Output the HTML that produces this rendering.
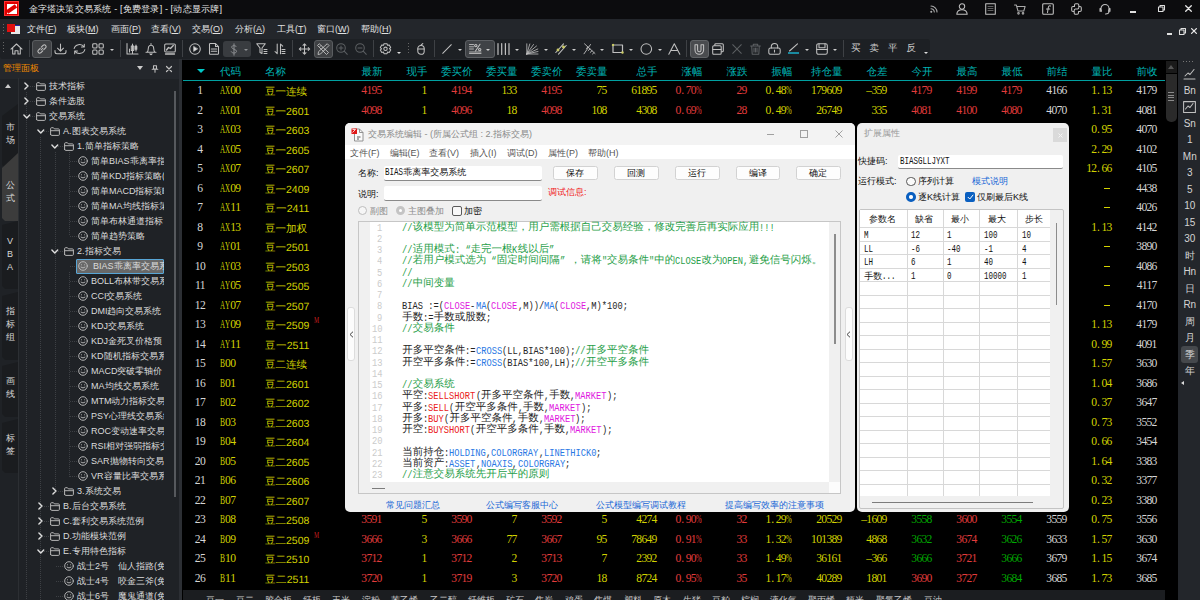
<!DOCTYPE html>
<html lang="zh"><head><meta charset="utf-8"><title>金字塔决策交易系统</title>
<style>
html,body{margin:0;padding:0}
body{width:1200px;height:600px;overflow:hidden;background:#000;position:relative;font-family:"Liberation Sans",sans-serif}
div,span,svg{position:absolute;box-sizing:border-box;white-space:nowrap}
span{display:block}
svg{overflow:visible}
i{font-style:normal;letter-spacing:1.5px;margin-left:.7px}
b{display:inline-block;font-weight:normal;width:5.8px;transform:scaleX(.6);transform-origin:0 50%;letter-spacing:0}
.i path,.i circle,.i rect,.i line,.i polyline{fill:none;stroke:#c0c0c0;stroke-width:1.05;stroke-linecap:round;stroke-linejoin:round}
.d path,.d circle,.d rect,.d line{stroke:#5c5f62}
</style></head><body>

<div style="left:0px;top:0px;width:1200px;height:19px;background:#0c0c0e;"></div>
<div style="left:4px;top:1px;width:15px;height:15px;background:#e00000;border:1px solid #f33"><div style="left:2px;top:2px;width:10px;height:10px;background:#fff"></div><div style="left:1px;top:5px;width:11px;height:4px;background:#e00000;transform:rotate(-35deg)"></div></div>
<span style="top:3px;font-size:9px;line-height:12px;color:#e6e6e6;font-family:'Liberation Sans',sans-serif;left:28.5px;width:193.5px;text-align-last:justify;">金字塔决策交易系统 - [免费登录] - [动态显示牌]</span>
<div style="left:0px;top:19px;width:1200px;height:41px;background:#23262b;"></div>
<div style="left:3px;top:24px;width:1px;height:1px;background:#666;"></div>
<div style="left:3px;top:27px;width:1px;height:1px;background:#666;"></div>
<div style="left:3px;top:30px;width:1px;height:1px;background:#666;"></div>
<div style="left:3px;top:33px;width:1px;height:1px;background:#666;"></div>
<div style="left:11px;top:25px;width:9px;height:9px;background:#e8e8e8;border-top:1px solid #22a"></div>
<div style="left:7px;top:24px;width:8px;height:8px;background:#e01010"></div>
<span style="top:23px;font-size:9px;line-height:12px;color:#e0e0e0;left:27px;width:29.49px;text-align-last:justify;">文件(<u>F</u>)</span>
<span style="top:23px;font-size:9px;line-height:12px;color:#e0e0e0;left:67px;width:31.49px;text-align-last:justify;">板块(<u>M</u>)</span>
<span style="top:23px;font-size:9px;line-height:12px;color:#e0e0e0;left:111px;width:30.00px;text-align-last:justify;">画面(<u>P</u>)</span>
<span style="top:23px;font-size:9px;line-height:12px;color:#e0e0e0;left:151px;width:30.00px;text-align-last:justify;">查看(<u>V</u>)</span>
<span style="top:23px;font-size:9px;line-height:12px;color:#e0e0e0;left:192px;width:30.99px;text-align-last:justify;">交易(<u>O</u>)</span>
<span style="top:23px;font-size:9px;line-height:12px;color:#e0e0e0;left:235px;width:30.00px;text-align-last:justify;">分析(<u>A</u>)</span>
<span style="top:23px;font-size:9px;line-height:12px;color:#e0e0e0;left:277px;width:29.49px;text-align-last:justify;">工具(<u>T</u>)</span>
<span style="top:23px;font-size:9px;line-height:12px;color:#e0e0e0;left:317px;width:32.49px;text-align-last:justify;">窗口(<u>W</u>)</span>
<span style="top:23px;font-size:9px;line-height:12px;color:#e0e0e0;left:361px;width:30.49px;text-align-last:justify;">帮助(<u>H</u>)</span>
<div style="left:0px;top:38.5px;width:930px;height:20.5px;background:#1d2024;border-radius:3px"></div>
<div style="left:3px;top:42px;width:1px;height:1px;background:#666;"></div>
<div style="left:3px;top:45px;width:1px;height:1px;background:#666;"></div>
<div style="left:3px;top:48px;width:1px;height:1px;background:#666;"></div>
<div style="left:3px;top:51px;width:1px;height:1px;background:#666;"></div>
<div style="left:0px;top:59px;width:183px;height:541px;background:#1f2226;"></div>
<div style="left:0px;top:59px;width:179px;height:19.5px;background:#24272c;"></div>
<div style="left:178.5px;top:59px;width:3.5px;height:541px;background:#2c2f34;"></div>
<span style="top:62px;font-size:9px;line-height:12px;color:#f08a00;left:3px;width:36.00px;text-align-last:justify;">管理面板</span>
<div style="left:137px;top:66px;width:0;height:0;border-left:3.5px solid transparent;border-right:3.5px solid transparent;border-top:4px solid #ccc"></div>
<svg class="i" style="left:150.5px;top:64.5px" width="8" height="8"><path d="M2.500 .700h3v3.300h-3zM1.200 4.200h5.600M4 4.200v3"/></svg>
<svg class="i" style="left:165.5px;top:66px" width="6" height="6"><path d="M.5 .5l5 5M5.5 .5l-5 5" style="stroke-width:1.2"/></svg>
<div style="left:17.5px;top:78px;width:1px;height:522px;background:#2c2f33;"></div>
<div style="left:5px;top:84px;width:0;height:0;border-left:3.5px solid transparent;border-right:3.5px solid transparent;border-bottom:4px solid #ccc"></div>
<div style="left:2px;top:104px;width:16px;height:64px;background:#1a1c1f;clip-path:polygon(100% 0,100% 100%,3px 100%,0 61px,0 12px)"></div>
<div style="left:2px;top:221px;width:16px;height:68px;background:#1a1c1f;clip-path:polygon(100% 0,100% 100%,3px 100%,0 65px,0 4px)"></div>
<div style="left:2px;top:292px;width:16px;height:68px;background:#1a1c1f;clip-path:polygon(100% 0,100% 100%,3px 100%,0 65px,0 4px)"></div>
<div style="left:2px;top:362px;width:16px;height:55px;background:#1a1c1f;clip-path:polygon(100% 0,100% 100%,3px 100%,0 52px,0 4px)"></div>
<div style="left:2px;top:419px;width:16px;height:54px;background:#1a1c1f;clip-path:polygon(100% 0,100% 100%,3px 100%,0 51px,0 4px)"></div>
<div style="left:2px;top:153px;width:16px;height:68px;background:#3c3c3c;clip-path:polygon(100% 0,100% 100%,3px 100%,0 65px,0 15px)"></div>
<span style="top:121px;font-size:9px;line-height:12px;color:#d8d8d8;left:-90px;width:200px;text-align:center;">市</span>
<span style="top:134px;font-size:9px;line-height:12px;color:#d8d8d8;left:-90px;width:200px;text-align:center;">场</span>
<span style="top:179px;font-size:9px;line-height:12px;color:#d8d8d8;left:-90px;width:200px;text-align:center;">公</span>
<span style="top:192px;font-size:9px;line-height:12px;color:#d8d8d8;left:-90px;width:200px;text-align:center;">式</span>
<span style="top:235px;font-size:9px;line-height:12px;color:#d8d8d8;left:-90px;width:200px;text-align:center;">V</span>
<span style="top:248px;font-size:9px;line-height:12px;color:#d8d8d8;left:-90px;width:200px;text-align:center;">B</span>
<span style="top:261px;font-size:9px;line-height:12px;color:#d8d8d8;left:-90px;width:200px;text-align:center;">A</span>
<span style="top:305px;font-size:9px;line-height:12px;color:#d8d8d8;left:-90px;width:200px;text-align:center;">指</span>
<span style="top:318px;font-size:9px;line-height:12px;color:#d8d8d8;left:-90px;width:200px;text-align:center;">标</span>
<span style="top:331px;font-size:9px;line-height:12px;color:#d8d8d8;left:-90px;width:200px;text-align:center;">组</span>
<span style="top:374.5px;font-size:9px;line-height:12px;color:#d8d8d8;left:-90px;width:200px;text-align:center;">画</span>
<span style="top:387.5px;font-size:9px;line-height:12px;color:#d8d8d8;left:-90px;width:200px;text-align:center;">线</span>
<span style="top:431.5px;font-size:9px;line-height:12px;color:#d8d8d8;left:-90px;width:200px;text-align:center;">标</span>
<span style="top:444.5px;font-size:9px;line-height:12px;color:#d8d8d8;left:-90px;width:200px;text-align:center;">签</span>
<div style="left:19px;top:78px;width:145px;height:522px;overflow:hidden">
<div style="left:7px;top:14px;width:1px;height:508px;background:repeating-linear-gradient(#3d4044 0 1px,transparent 1px 2px)"></div>
<div style="left:21px;top:59px;width:1px;height:463px;background:repeating-linear-gradient(#3d4044 0 1px,transparent 1px 2px)"></div>
<div style="left:36px;top:74px;width:1px;height:340px;background:repeating-linear-gradient(#3d4044 0 1px,transparent 1px 2px)"></div>
<div style="left:50px;top:74px;width:1px;height:84px;background:repeating-linear-gradient(#3d4044 0 1px,transparent 1px 2px)"></div>
<div style="left:50px;top:194px;width:1px;height:205px;background:repeating-linear-gradient(#3d4044 0 1px,transparent 1px 2px)"></div>
<svg class="i" style="left:5px;top:4px" width="6" height="8"><path d="M.9 1l3.100 3L.9 7" style="stroke:#ddd;stroke-width:1.400"/></svg>
<svg class="i" style="left:17px;top:4px" width="10" height="9"><path d="M.6 7.400V1.700a1 1 0 0 1 1-1h1.800l1 1.200h4a1 1 0 0 1 1 1v4.500a1 1 0 0 1-1 1h-6.800a1 1 0 0 1-1-1zM.6 3.700h8.800" style="stroke:#b4b4b4;stroke-width:1"/></svg>
<div style="left:11px;top:8px;width:5px;height:1px;background:repeating-linear-gradient(90deg,#3d4044 0 1px,transparent 1px 2px)"></div>
<span style="left:30px;top:2px;font-size:9px;line-height:12px;color:#dcdcdc;width:36.00px;text-align-last:justify">技术指标</span>
<svg class="i" style="left:5px;top:19px" width="6" height="8"><path d="M.9 1l3.100 3L.9 7" style="stroke:#ddd;stroke-width:1.400"/></svg>
<svg class="i" style="left:17px;top:19px" width="10" height="9"><path d="M.6 7.400V1.700a1 1 0 0 1 1-1h1.800l1 1.200h4a1 1 0 0 1 1 1v4.500a1 1 0 0 1-1 1h-6.800a1 1 0 0 1-1-1zM.6 3.700h8.800" style="stroke:#b4b4b4;stroke-width:1"/></svg>
<div style="left:11px;top:23px;width:5px;height:1px;background:repeating-linear-gradient(90deg,#3d4044 0 1px,transparent 1px 2px)"></div>
<span style="left:30px;top:17px;font-size:9px;line-height:12px;color:#dcdcdc;width:36.00px;text-align-last:justify">条件选股</span>
<svg class="i" style="left:3.5px;top:35.5px" width="8" height="6"><path d="M.9 1l2.900 3.100L6.700 1" style="stroke:#ddd;stroke-width:1.400"/></svg>
<svg class="i" style="left:17px;top:34px" width="10" height="9"><path d="M.6 7.400V1.700a1 1 0 0 1 1-1h1.800l1 1.200h4a1 1 0 0 1 1 1v4.500a1 1 0 0 1-1 1h-6.800a1 1 0 0 1-1-1zM.6 3.700h8.800" style="stroke:#b4b4b4;stroke-width:1"/></svg>
<div style="left:11px;top:38px;width:5px;height:1px;background:repeating-linear-gradient(90deg,#3d4044 0 1px,transparent 1px 2px)"></div>
<span style="left:30px;top:32px;font-size:9px;line-height:12px;color:#dcdcdc;width:36.00px;text-align-last:justify">交易系统</span>
<svg class="i" style="left:17.5px;top:50.5px" width="8" height="6"><path d="M.9 1l2.900 3.100L6.700 1" style="stroke:#ddd;stroke-width:1.400"/></svg>
<svg class="i" style="left:31px;top:49px" width="10" height="9"><path d="M.6 7.400V1.700a1 1 0 0 1 1-1h1.800l1 1.200h4a1 1 0 0 1 1 1v4.500a1 1 0 0 1-1 1h-6.800a1 1 0 0 1-1-1zM.6 3.700h8.800" style="stroke:#b4b4b4;stroke-width:1"/></svg>
<div style="left:25px;top:53px;width:5px;height:1px;background:repeating-linear-gradient(90deg,#3d4044 0 1px,transparent 1px 2px)"></div>
<span style="left:44px;top:47px;font-size:9px;line-height:12px;color:#dcdcdc;width:62.50px;text-align-last:justify">A.图表交易系统</span>
<svg class="i" style="left:31.5px;top:65.5px" width="8" height="6"><path d="M.9 1l2.900 3.100L6.700 1" style="stroke:#ddd;stroke-width:1.400"/></svg>
<svg class="i" style="left:45px;top:64px" width="10" height="9"><path d="M.6 7.400V1.700a1 1 0 0 1 1-1h1.800l1 1.200h4a1 1 0 0 1 1 1v4.500a1 1 0 0 1-1 1h-6.800a1 1 0 0 1-1-1zM.6 3.700h8.800" style="stroke:#b4b4b4;stroke-width:1"/></svg>
<div style="left:39px;top:68px;width:5px;height:1px;background:repeating-linear-gradient(90deg,#3d4044 0 1px,transparent 1px 2px)"></div>
<span style="left:58px;top:62px;font-size:9px;line-height:12px;color:#dcdcdc;width:61.51px;text-align-last:justify">1.简单指标策略</span>
<div style="left:51px;top:83px;width:7px;height:1px;background:repeating-linear-gradient(90deg,#3d4044 0 1px,transparent 1px 2px)"></div>
<svg class="i" style="left:59px;top:78px" width="10" height="10"><circle cx="5" cy="5" r="4.3" style="stroke-width:.9"/><path d="M3 6.2q2 1.8 4 0M3.4 3.8h.1M6.6 3.8h.1" style="stroke-width:.9"/></svg>
<span style="left:72px;top:77px;font-size:9px;line-height:12px;color:#dcdcdc;width:83.51px;text-align-last:justify">简单BIAS乖离率指标</span>
<div style="left:51px;top:98px;width:7px;height:1px;background:repeating-linear-gradient(90deg,#3d4044 0 1px,transparent 1px 2px)"></div>
<svg class="i" style="left:59px;top:93px" width="10" height="10"><circle cx="5" cy="5" r="4.3" style="stroke-width:.9"/><path d="M3 6.2q2 1.8 4 0M3.4 3.8h.1M6.6 3.8h.1" style="stroke-width:.9"/></svg>
<span style="left:72px;top:92px;font-size:9px;line-height:12px;color:#dcdcdc;width:74.00px;text-align-last:justify">简单KDJ指标策略(</span>
<div style="left:51px;top:113px;width:7px;height:1px;background:repeating-linear-gradient(90deg,#3d4044 0 1px,transparent 1px 2px)"></div>
<svg class="i" style="left:59px;top:108px" width="10" height="10"><circle cx="5" cy="5" r="4.3" style="stroke-width:.9"/><path d="M3 6.2q2 1.8 4 0M3.4 3.8h.1M6.6 3.8h.1" style="stroke-width:.9"/></svg>
<span style="left:72px;top:107px;font-size:9px;line-height:12px;color:#dcdcdc;width:80.50px;text-align-last:justify">简单MACD指标策略</span>
<div style="left:51px;top:128px;width:7px;height:1px;background:repeating-linear-gradient(90deg,#3d4044 0 1px,transparent 1px 2px)"></div>
<svg class="i" style="left:59px;top:123px" width="10" height="10"><circle cx="5" cy="5" r="4.3" style="stroke-width:.9"/><path d="M3 6.2q2 1.8 4 0M3.4 3.8h.1M6.6 3.8h.1" style="stroke-width:.9"/></svg>
<span style="left:72px;top:122px;font-size:9px;line-height:12px;color:#dcdcdc;width:76.50px;text-align-last:justify">简单MA均线指标策</span>
<div style="left:51px;top:143px;width:7px;height:1px;background:repeating-linear-gradient(90deg,#3d4044 0 1px,transparent 1px 2px)"></div>
<svg class="i" style="left:59px;top:138px" width="10" height="10"><circle cx="5" cy="5" r="4.3" style="stroke-width:.9"/><path d="M3 6.2q2 1.8 4 0M3.4 3.8h.1M6.6 3.8h.1" style="stroke-width:.9"/></svg>
<span style="left:72px;top:137px;font-size:9px;line-height:12px;color:#dcdcdc;width:72.00px;text-align-last:justify">简单布林通道指标</span>
<div style="left:51px;top:158px;width:7px;height:1px;background:repeating-linear-gradient(90deg,#3d4044 0 1px,transparent 1px 2px)"></div>
<svg class="i" style="left:59px;top:153px" width="10" height="10"><circle cx="5" cy="5" r="4.3" style="stroke-width:.9"/><path d="M3 6.2q2 1.8 4 0M3.4 3.8h.1M6.6 3.8h.1" style="stroke-width:.9"/></svg>
<span style="left:72px;top:152px;font-size:9px;line-height:12px;color:#dcdcdc;width:54.00px;text-align-last:justify">简单趋势策略</span>
<svg class="i" style="left:31.5px;top:170.5px" width="8" height="6"><path d="M.9 1l2.900 3.100L6.700 1" style="stroke:#ddd;stroke-width:1.400"/></svg>
<svg class="i" style="left:45px;top:169px" width="10" height="9"><path d="M.6 7.400V1.700a1 1 0 0 1 1-1h1.800l1 1.200h4a1 1 0 0 1 1 1v4.500a1 1 0 0 1-1 1h-6.800a1 1 0 0 1-1-1zM.6 3.700h8.800" style="stroke:#b4b4b4;stroke-width:1"/></svg>
<div style="left:39px;top:173px;width:5px;height:1px;background:repeating-linear-gradient(90deg,#3d4044 0 1px,transparent 1px 2px)"></div>
<span style="left:58px;top:167px;font-size:9px;line-height:12px;color:#dcdcdc;width:43.51px;text-align-last:justify">2.指标交易</span>
<div style="left:51px;top:188px;width:7px;height:1px;background:repeating-linear-gradient(90deg,#3d4044 0 1px,transparent 1px 2px)"></div>
<div style="left:57px;top:180.5px;width:88px;height:15px;background:#686868;border:1px solid #58a6d6;border-radius:1px"></div>
<svg class="i" style="left:59px;top:183px" width="10" height="10"><circle cx="5" cy="5" r="4.3" style="stroke-width:.9"/><path d="M3 6.2q2 1.8 4 0M3.4 3.8h.1M6.6 3.8h.1" style="stroke-width:.9"/></svg>
<span style="left:74px;top:182px;font-size:9px;line-height:12px;color:#dcdcdc;width:83.51px;text-align-last:justify">BIAS乖离率交易系统</span>
<div style="left:51px;top:203px;width:7px;height:1px;background:repeating-linear-gradient(90deg,#3d4044 0 1px,transparent 1px 2px)"></div>
<svg class="i" style="left:59px;top:198px" width="10" height="10"><circle cx="5" cy="5" r="4.3" style="stroke-width:.9"/><path d="M3 6.2q2 1.8 4 0M3.4 3.8h.1M6.6 3.8h.1" style="stroke-width:.9"/></svg>
<span style="left:72px;top:197px;font-size:9px;line-height:12px;color:#dcdcdc;width:86.01px;text-align-last:justify">BOLL布林带交易系统</span>
<div style="left:51px;top:218px;width:7px;height:1px;background:repeating-linear-gradient(90deg,#3d4044 0 1px,transparent 1px 2px)"></div>
<svg class="i" style="left:59px;top:213px" width="10" height="10"><circle cx="5" cy="5" r="4.3" style="stroke-width:.9"/><path d="M3 6.2q2 1.8 4 0M3.4 3.8h.1M6.6 3.8h.1" style="stroke-width:.9"/></svg>
<span style="left:72px;top:212px;font-size:9px;line-height:12px;color:#dcdcdc;width:51.50px;text-align-last:justify">CCI交易系统</span>
<div style="left:51px;top:233px;width:7px;height:1px;background:repeating-linear-gradient(90deg,#3d4044 0 1px,transparent 1px 2px)"></div>
<svg class="i" style="left:59px;top:228px" width="10" height="10"><circle cx="5" cy="5" r="4.3" style="stroke-width:.9"/><path d="M3 6.2q2 1.8 4 0M3.4 3.8h.1M6.6 3.8h.1" style="stroke-width:.9"/></svg>
<span style="left:72px;top:227px;font-size:9px;line-height:12px;color:#dcdcdc;width:70.50px;text-align-last:justify">DMI趋向交易系统</span>
<div style="left:51px;top:248px;width:7px;height:1px;background:repeating-linear-gradient(90deg,#3d4044 0 1px,transparent 1px 2px)"></div>
<svg class="i" style="left:59px;top:243px" width="10" height="10"><circle cx="5" cy="5" r="4.3" style="stroke-width:.9"/><path d="M3 6.2q2 1.8 4 0M3.4 3.8h.1M6.6 3.8h.1" style="stroke-width:.9"/></svg>
<span style="left:72px;top:242px;font-size:9px;line-height:12px;color:#dcdcdc;width:53.00px;text-align-last:justify">KDJ交易系统</span>
<div style="left:51px;top:263px;width:7px;height:1px;background:repeating-linear-gradient(90deg,#3d4044 0 1px,transparent 1px 2px)"></div>
<svg class="i" style="left:59px;top:258px" width="10" height="10"><circle cx="5" cy="5" r="4.3" style="stroke-width:.9"/><path d="M3 6.2q2 1.8 4 0M3.4 3.8h.1M6.6 3.8h.1" style="stroke-width:.9"/></svg>
<span style="left:72px;top:257px;font-size:9px;line-height:12px;color:#dcdcdc;width:71.00px;text-align-last:justify">KDJ金死叉价格预</span>
<div style="left:51px;top:278px;width:7px;height:1px;background:repeating-linear-gradient(90deg,#3d4044 0 1px,transparent 1px 2px)"></div>
<svg class="i" style="left:59px;top:273px" width="10" height="10"><circle cx="5" cy="5" r="4.3" style="stroke-width:.9"/><path d="M3 6.2q2 1.8 4 0M3.4 3.8h.1M6.6 3.8h.1" style="stroke-width:.9"/></svg>
<span style="left:72px;top:272px;font-size:9px;line-height:12px;color:#dcdcdc;width:75.50px;text-align-last:justify">KD随机指标交易系</span>
<div style="left:51px;top:293px;width:7px;height:1px;background:repeating-linear-gradient(90deg,#3d4044 0 1px,transparent 1px 2px)"></div>
<svg class="i" style="left:59px;top:288px" width="10" height="10"><circle cx="5" cy="5" r="4.3" style="stroke-width:.9"/><path d="M3 6.2q2 1.8 4 0M3.4 3.8h.1M6.6 3.8h.1" style="stroke-width:.9"/></svg>
<span style="left:72px;top:287px;font-size:9px;line-height:12px;color:#dcdcdc;width:71.50px;text-align-last:justify">MACD突破零轴价</span>
<div style="left:51px;top:308px;width:7px;height:1px;background:repeating-linear-gradient(90deg,#3d4044 0 1px,transparent 1px 2px)"></div>
<svg class="i" style="left:59px;top:303px" width="10" height="10"><circle cx="5" cy="5" r="4.3" style="stroke-width:.9"/><path d="M3 6.2q2 1.8 4 0M3.4 3.8h.1M6.6 3.8h.1" style="stroke-width:.9"/></svg>
<span style="left:72px;top:302px;font-size:9px;line-height:12px;color:#dcdcdc;width:67.50px;text-align-last:justify">MA均线交易系统</span>
<div style="left:51px;top:323px;width:7px;height:1px;background:repeating-linear-gradient(90deg,#3d4044 0 1px,transparent 1px 2px)"></div>
<svg class="i" style="left:59px;top:318px" width="10" height="10"><circle cx="5" cy="5" r="4.3" style="stroke-width:.9"/><path d="M3 6.2q2 1.8 4 0M3.4 3.8h.1M6.6 3.8h.1" style="stroke-width:.9"/></svg>
<span style="left:72px;top:317px;font-size:9px;line-height:12px;color:#dcdcdc;width:74.49px;text-align-last:justify">MTM动力指标交易</span>
<div style="left:51px;top:338px;width:7px;height:1px;background:repeating-linear-gradient(90deg,#3d4044 0 1px,transparent 1px 2px)"></div>
<svg class="i" style="left:59px;top:333px" width="10" height="10"><circle cx="5" cy="5" r="4.3" style="stroke-width:.9"/><path d="M3 6.2q2 1.8 4 0M3.4 3.8h.1M6.6 3.8h.1" style="stroke-width:.9"/></svg>
<span style="left:72px;top:332px;font-size:9px;line-height:12px;color:#dcdcdc;width:81.01px;text-align-last:justify">PSY心理线交易系统</span>
<div style="left:51px;top:353px;width:7px;height:1px;background:repeating-linear-gradient(90deg,#3d4044 0 1px,transparent 1px 2px)"></div>
<svg class="i" style="left:59px;top:348px" width="10" height="10"><circle cx="5" cy="5" r="4.3" style="stroke-width:.9"/><path d="M3 6.2q2 1.8 4 0M3.4 3.8h.1M6.6 3.8h.1" style="stroke-width:.9"/></svg>
<span style="left:72px;top:347px;font-size:9px;line-height:12px;color:#dcdcdc;width:74.00px;text-align-last:justify">ROC变动速率交易</span>
<div style="left:51px;top:368px;width:7px;height:1px;background:repeating-linear-gradient(90deg,#3d4044 0 1px,transparent 1px 2px)"></div>
<svg class="i" style="left:59px;top:363px" width="10" height="10"><circle cx="5" cy="5" r="4.3" style="stroke-width:.9"/><path d="M3 6.2q2 1.8 4 0M3.4 3.8h.1M6.6 3.8h.1" style="stroke-width:.9"/></svg>
<span style="left:72px;top:362px;font-size:9px;line-height:12px;color:#dcdcdc;width:78.00px;text-align-last:justify">RSI相对强弱指标交</span>
<div style="left:51px;top:383px;width:7px;height:1px;background:repeating-linear-gradient(90deg,#3d4044 0 1px,transparent 1px 2px)"></div>
<svg class="i" style="left:59px;top:378px" width="10" height="10"><circle cx="5" cy="5" r="4.3" style="stroke-width:.9"/><path d="M3 6.2q2 1.8 4 0M3.4 3.8h.1M6.6 3.8h.1" style="stroke-width:.9"/></svg>
<span style="left:72px;top:377px;font-size:9px;line-height:12px;color:#dcdcdc;width:72.51px;text-align-last:justify">SAR抛物转向交易</span>
<div style="left:51px;top:398px;width:7px;height:1px;background:repeating-linear-gradient(90deg,#3d4044 0 1px,transparent 1px 2px)"></div>
<svg class="i" style="left:59px;top:393px" width="10" height="10"><circle cx="5" cy="5" r="4.3" style="stroke-width:.9"/><path d="M3 6.2q2 1.8 4 0M3.4 3.8h.1M6.6 3.8h.1" style="stroke-width:.9"/></svg>
<span style="left:72px;top:392px;font-size:9px;line-height:12px;color:#dcdcdc;width:75.50px;text-align-last:justify">VR容量比率交易系</span>
<svg class="i" style="left:33px;top:409px" width="6" height="8"><path d="M.9 1l3.100 3L.9 7" style="stroke:#ddd;stroke-width:1.400"/></svg>
<svg class="i" style="left:45px;top:409px" width="10" height="9"><path d="M.6 7.400V1.700a1 1 0 0 1 1-1h1.800l1 1.200h4a1 1 0 0 1 1 1v4.500a1 1 0 0 1-1 1h-6.800a1 1 0 0 1-1-1zM.6 3.700h8.800" style="stroke:#b4b4b4;stroke-width:1"/></svg>
<div style="left:39px;top:413px;width:5px;height:1px;background:repeating-linear-gradient(90deg,#3d4044 0 1px,transparent 1px 2px)"></div>
<span style="left:58px;top:407px;font-size:9px;line-height:12px;color:#dcdcdc;width:43.51px;text-align-last:justify">3.系统交易</span>
<svg class="i" style="left:19px;top:424px" width="6" height="8"><path d="M.9 1l3.100 3L.9 7" style="stroke:#ddd;stroke-width:1.400"/></svg>
<svg class="i" style="left:31px;top:424px" width="10" height="9"><path d="M.6 7.400V1.700a1 1 0 0 1 1-1h1.800l1 1.200h4a1 1 0 0 1 1 1v4.500a1 1 0 0 1-1 1h-6.800a1 1 0 0 1-1-1zM.6 3.700h8.800" style="stroke:#b4b4b4;stroke-width:1"/></svg>
<div style="left:25px;top:428px;width:5px;height:1px;background:repeating-linear-gradient(90deg,#3d4044 0 1px,transparent 1px 2px)"></div>
<span style="left:44px;top:422px;font-size:9px;line-height:12px;color:#dcdcdc;width:62.50px;text-align-last:justify">B.后台交易系统</span>
<svg class="i" style="left:19px;top:439px" width="6" height="8"><path d="M.9 1l3.100 3L.9 7" style="stroke:#ddd;stroke-width:1.400"/></svg>
<svg class="i" style="left:31px;top:439px" width="10" height="9"><path d="M.6 7.400V1.700a1 1 0 0 1 1-1h1.800l1 1.200h4a1 1 0 0 1 1 1v4.500a1 1 0 0 1-1 1h-6.800a1 1 0 0 1-1-1zM.6 3.700h8.800" style="stroke:#b4b4b4;stroke-width:1"/></svg>
<div style="left:25px;top:443px;width:5px;height:1px;background:repeating-linear-gradient(90deg,#3d4044 0 1px,transparent 1px 2px)"></div>
<span style="left:44px;top:437px;font-size:9px;line-height:12px;color:#dcdcdc;width:81.00px;text-align-last:justify">C.套利交易系统范例</span>
<svg class="i" style="left:19px;top:454px" width="6" height="8"><path d="M.9 1l3.100 3L.9 7" style="stroke:#ddd;stroke-width:1.400"/></svg>
<svg class="i" style="left:31px;top:454px" width="10" height="9"><path d="M.6 7.400V1.700a1 1 0 0 1 1-1h1.800l1 1.200h4a1 1 0 0 1 1 1v4.500a1 1 0 0 1-1 1h-6.800a1 1 0 0 1-1-1zM.6 3.700h8.800" style="stroke:#b4b4b4;stroke-width:1"/></svg>
<div style="left:25px;top:458px;width:5px;height:1px;background:repeating-linear-gradient(90deg,#3d4044 0 1px,transparent 1px 2px)"></div>
<span style="left:44px;top:452px;font-size:9px;line-height:12px;color:#dcdcdc;width:63.00px;text-align-last:justify">D.功能模块范例</span>
<svg class="i" style="left:17.5px;top:470.5px" width="8" height="6"><path d="M.9 1l2.900 3.100L6.700 1" style="stroke:#ddd;stroke-width:1.400"/></svg>
<svg class="i" style="left:31px;top:469px" width="10" height="9"><path d="M.6 7.400V1.700a1 1 0 0 1 1-1h1.800l1 1.200h4a1 1 0 0 1 1 1v4.500a1 1 0 0 1-1 1h-6.800a1 1 0 0 1-1-1zM.6 3.700h8.800" style="stroke:#b4b4b4;stroke-width:1"/></svg>
<div style="left:25px;top:473px;width:5px;height:1px;background:repeating-linear-gradient(90deg,#3d4044 0 1px,transparent 1px 2px)"></div>
<span style="left:44px;top:467px;font-size:9px;line-height:12px;color:#dcdcdc;width:62.50px;text-align-last:justify">E.专用特色指标</span>
<div style="left:37px;top:488px;width:7px;height:1px;background:repeating-linear-gradient(90deg,#3d4044 0 1px,transparent 1px 2px)"></div>
<svg class="i" style="left:45px;top:483px" width="10" height="10"><circle cx="5" cy="5" r="4.3" style="stroke-width:.9"/><path d="M3 6.2q2 1.8 4 0M3.4 3.8h.1M6.6 3.8h.1" style="stroke-width:.9"/></svg>
<span style="left:58px;top:482px;font-size:9px;line-height:12px;color:#dcdcdc;width:89.00px;text-align-last:justify">战士2号　仙人指路(免</span>
<div style="left:37px;top:503px;width:7px;height:1px;background:repeating-linear-gradient(90deg,#3d4044 0 1px,transparent 1px 2px)"></div>
<svg class="i" style="left:45px;top:498px" width="10" height="10"><circle cx="5" cy="5" r="4.3" style="stroke-width:.9"/><path d="M3 6.2q2 1.8 4 0M3.4 3.8h.1M6.6 3.8h.1" style="stroke-width:.9"/></svg>
<span style="left:58px;top:497px;font-size:9px;line-height:12px;color:#dcdcdc;width:89.00px;text-align-last:justify">战士4号　咬金三斧(免</span>
<div style="left:37px;top:518px;width:7px;height:1px;background:repeating-linear-gradient(90deg,#3d4044 0 1px,transparent 1px 2px)"></div>
<svg class="i" style="left:45px;top:513px" width="10" height="10"><circle cx="5" cy="5" r="4.3" style="stroke-width:.9"/><path d="M3 6.2q2 1.8 4 0M3.4 3.8h.1M6.6 3.8h.1" style="stroke-width:.9"/></svg>
<span style="left:58px;top:512px;font-size:9px;line-height:12px;color:#dcdcdc;width:89.00px;text-align-last:justify">战士6号　魔鬼通道(免</span>
</div>
<div style="left:174px;top:91px;width:2px;height:406px;background:#56595d;"></div>
<svg class="i" style="left:10px;top:43px" width="13" height="12" viewBox="0 0 13 12"><path d="M1 6.2L6.5 1 12 6.2M2.7 5.2V11H5V7.8h3V11h2.3V5.2"/></svg>
<div style="left:29px;top:40px;width:1px;height:17px;background:#3e4145;"></div>
<div style="left:32px;top:40px;width:19.5px;height:17.5px;background:#3f4144;border:1px solid #5a5d60;border-radius:3px"></div>
<svg class="i" style="left:36px;top:43px" width="12" height="12" viewBox="0 0 12 12"><path d="M5 7L7 5M4.2 5.3L2.2 7.3a1.8 1.8 0 0 0 2.5 2.5l2-2M7.8 6.7l2-2a1.8 1.8 0 0 0-2.5-2.5l-2 2"/></svg>
<svg class="i" style="left:54px;top:43px" width="13" height="12" viewBox="0 0 13 12"><path d="M6.5 1v7M3.5 5.2l3 3 3-3M1 7.5v1.2a2 2 0 0 0 2 2h7a2 2 0 0 0 2-2V7.5"/></svg>
<svg class="i" style="left:73px;top:43px" width="13" height="12" viewBox="0 0 13 12"><path d="M1.2 5.5a5.3 4.6 0 0 1 9.8-1.7M11.3 1.2v2.8H8.5M11.8 6.5a5.3 4.6 0 0 1-9.8 1.7M1.7 10.8V8H4.5"/></svg>
<svg class="i" style="left:92px;top:43px" width="12" height="12" viewBox="0 0 12 12"><rect x=".7" y=".7" width="4.3" height="4.3" rx="1"/><rect x="7" y=".7" width="4.3" height="4.3" rx="1"/><rect x=".7" y="7" width="4.3" height="4.3" rx="1"/><rect x="7" y="7" width="4.3" height="4.3" rx="1"/></svg>
<div style="left:109.5px;top:48.5px;width:0;height:0;border-left:2px solid transparent;border-right:2px solid transparent;border-top:2.5px solid #ccc"></div>
<div style="left:120px;top:40px;width:1px;height:17px;background:#3e4145;"></div>
<svg class="i" style="left:126px;top:43px" width="13" height="12" viewBox="0 0 13 12"><path d="M1 .5V11h11M3.5 6v3M6.5 1v9M5.3 3h2.4v4.5H5.3zM10 2v6M9.2 3.2h1.6v3H9.2z"/></svg>
<svg class="i" style="left:145px;top:43px" width="12" height="12" viewBox="0 0 12 12"><path d="M1 9.2h10M2.3 9.2c1.2-1.3.7-3.6 1.3-5.4a2.6 2.6 0 0 1 4.8 0c.6 1.8.1 4.100 1.300 5.400M5 10.600a1 1 0 0 0 2 0M6 .6v1"/></svg>
<svg class="i" style="left:164px;top:43px" width="12" height="12" viewBox="0 0 12 12"><rect x=".7" y="1" width="10.600" height="8" rx="1"/><path d="M2.500 7l2-2.500 2 1 2.800-3M1.500 11h9" style="stroke-width:1.3"/></svg>
<div style="left:182px;top:40px;width:1px;height:17px;background:#3e4145;"></div>
<svg class="i" style="left:189px;top:43px" width="12" height="12" viewBox="0 0 12 12"><circle cx="6" cy="6" r="5.300"/><path d="M4.600 3.600v4.800L8.500 6z" style="fill:#ddd;stroke-width:.600"/></svg>
<svg class="i" style="left:208px;top:43px" width="12" height="12" viewBox="0 0 12 12"><path d="M1.500 1a.8.8 0 0 1 .8-.5h5.200L10.500 3.500v7a.8.8 0 0 1-.8.8H2.300a.8.8 0 0 1-.8-.8zM7.500.5v3h3M3.300 6h5.400M3.300 8.300h5.400" /></svg>
<div style="left:223px;top:40.5px;width:28px;height:16.5px;background:#393c40;border-radius:3px"></div>
<svg style="left:229.5px;top:42.5px" width="8" height="13" viewBox="0 0 8 13"><path d="M6.300 3.600C5.800 2.300 1.700 2 1.700 4.200S6.500 6 6.500 8.300 2 10.600 1.300 8.800M4 .800v11.400" fill="none" stroke="#8e9093" stroke-width="1" stroke-linecap="round"/></svg>
<div style="left:243.5px;top:48.5px;width:0;height:0;border-left:2px solid transparent;border-right:2px solid transparent;border-top:2.5px solid #8e9093"></div>
<svg class="i" style="left:256px;top:43px" width="12" height="12" viewBox="0 0 12 12"><path d="M.7.800h8.600L6 5v5.500L4 9.500V5zM8 6.500h3M8 8.500h3M8 10.500h3"/></svg>
<svg class="i" style="left:274px;top:43px" width="12" height="12" viewBox="0 0 12 12"><path d="M1 8.500l2.200 2.200V1M6.500 10.800V1L8.700 3.200M8 6.500h3M8 8.500h3M8 10.500h3"/></svg>
<div style="left:292px;top:40px;width:1px;height:17px;background:#3e4145;"></div>
<svg class="i" style="left:298px;top:43px" width="13" height="12" viewBox="0 0 13 12"><path d="M6.500.800v10.400M1.300 6h10.400M5 2.300L6.500.800 8 2.300M5 9.700l1.500 1.500L8 9.700M2.800 4.500L1.300 6l1.500 1.500M10.200 4.500L11.700 6l-1.500 1.500"/></svg>
<div style="left:314px;top:40px;width:19px;height:17.5px;background:#3f4144;border:1px solid #5a5d60;border-radius:3px"></div>
<svg class="i" style="left:317px;top:43px" width="13" height="12" viewBox="0 0 13 12"><path d="M2.500 1L11.500 9.500 9.500 11.500.800 2.800zM10.500 1L12 2.500 3.500 11 1 11.500 1.500 9zM4 2.500l-1 1M6 4.500l-1 1M8 6.500l-1 1" style="stroke-width:.9"/></svg>
<svg class="i d" style="left:336px;top:43px" width="12" height="12" viewBox="0 0 12 12"><circle cx="5" cy="5" r="4.300"/><path d="M8.200 8.200L11.300 11.300M3 5h4M5 3v4"/></svg>
<svg class="i d" style="left:354.5px;top:43px" width="12" height="12" viewBox="0 0 12 12"><circle cx="5" cy="5" r="4.300"/><path d="M8.200 8.200L11.300 11.300M3 5h4"/></svg>
<div style="left:373px;top:40px;width:1px;height:17px;background:#3e4145;"></div>
<svg class="i" style="left:379px;top:43px" width="13" height="12" viewBox="0 0 13 12"><path d="M5 .700h3l.5 1.600 1.700-.400 1.500 2.600-1.200 1.200 1.200 1.200-1.500 2.600-1.700-.400-.5 1.600H5l-.5-1.600-1.700.400L1.300 7 2.500 5.800 1.300 4.500l1.500-2.600 1.700.400z"/><circle cx="6.500" cy="5.800" r="1.700"/></svg>
<div style="left:396.5px;top:51.5px;width:0;height:0;border-left:2px solid transparent;border-right:2px solid transparent;border-top:2.5px solid #ddd"></div>
<div style="left:408px;top:43px;width:1px;height:1px;background:#666;"></div>
<div style="left:408px;top:46px;width:1px;height:1px;background:#666;"></div>
<div style="left:408px;top:49px;width:1px;height:1px;background:#666;"></div>
<div style="left:408px;top:52px;width:1px;height:1px;background:#666;"></div>
<svg class="i" style="left:417px;top:43px" width="8" height="12" viewBox="0 0 8 12"><rect x=".800" y="2.500" width="6.400" height="8.800" rx="3.100"/><path d="M.8 6h6.400M4 2.500c0-1.500 1.500-1 1.800-2"/></svg>
<div style="left:434px;top:40px;width:1px;height:17px;background:#3e4145;"></div>
<svg class="i" style="left:442px;top:43px" width="10" height="12" viewBox="0 0 10 12"><path d="M.700 10.300L9.300 1.700"/></svg>
<div style="left:457.5px;top:48.5px;width:0;height:0;border-left:2px solid transparent;border-right:2px solid transparent;border-top:2.5px solid #ccc"></div>
<div style="left:465px;top:40px;width:29.5px;height:17.5px;background:#3f4246;border:1px solid #5c5f63;border-radius:3px"></div>
<svg class="i" style="left:469px;top:43px" width="13" height="12" viewBox="0 0 13 12"><path d="M.5 1.500h4M.5 3.800h4M.5 6h4M.500 9h11.500M.500 10.500h11.500" style="stroke-width:.9"/><path d="M11 1.300L6.500 8"/><circle cx="6.800" cy="2.600" r="1.200"/><circle cx="10.700" cy="6.600" r="1.200"/></svg>
<div style="left:486px;top:48.5px;width:0;height:0;border-left:2px solid transparent;border-right:2px solid transparent;border-top:2.5px solid #ccc"></div>
<svg class="i" style="left:497px;top:43px" width="14" height="12" viewBox="0 0 14 12"><path d="M1 .500v11M4.700 .500v11M8.400 .500v11M12 .500v11" style="stroke-width:1.200"/></svg>
<div style="left:514.5px;top:48.5px;width:0;height:0;border-left:2px solid transparent;border-right:2px solid transparent;border-top:2.5px solid #ccc"></div>
<svg class="i" style="left:526px;top:43px" width="13" height="12" viewBox="0 0 13 12"><path d="M.800 11V.800M.800 11l3-10M.800 11L7.500 1.500M.800 11L10.500 3M.800 11l11-5M.800 11L12 8.500M.800 11H12" style="stroke-width:.8"/></svg>
<div style="left:543.5px;top:48.5px;width:0;height:0;border-left:2px solid transparent;border-right:2px solid transparent;border-top:2.5px solid #ccc"></div>
<svg class="i" style="left:555px;top:43px" width="12" height="12" viewBox="0 0 12 12"><path d="M.800 9.500L8.500 .800M3.500 11.200L11.200 2.500" /><circle cx="3" cy="7" r=".9" style="fill:#cc6;stroke:#cc6"/><circle cx="8.500" cy="4" r=".9" style="fill:#cc6;stroke:#cc6"/></svg>
<div style="left:571.5px;top:48.5px;width:0;height:0;border-left:2px solid transparent;border-right:2px solid transparent;border-top:2.5px solid #ccc"></div>
<svg class="i" style="left:583px;top:43px" width="13" height="12" viewBox="0 0 13 12"><path d="M1 10.800L7.500 1.500M1.500 .800L12 10.500M5 4l-1.800 1.600M7 6l-1.800 1.600M9 7.800l-1.800 1.600M11 9.600l-1.500 1.400" style="stroke-width:.9"/></svg>
<div style="left:600px;top:48.5px;width:0;height:0;border-left:2px solid transparent;border-right:2px solid transparent;border-top:2.5px solid #ccc"></div>
<svg class="i" style="left:612px;top:44px" width="12" height="10" viewBox="0 0 12 10"><rect x="1" y="1" width="9.500" height="7.500" style="stroke-width:1.200"/><circle cx="1" cy="1" r=".700" style="fill:#cc6;stroke:#cc6"/><circle cx="10.500" cy="8.500" r=".700" style="fill:#cc6;stroke:#cc6"/></svg>
<div style="left:628.5px;top:48.5px;width:0;height:0;border-left:2px solid transparent;border-right:2px solid transparent;border-top:2.5px solid #ccc"></div>
<svg class="i" style="left:640px;top:43px" width="13" height="12" viewBox="0 0 13 12"><circle cx="6.300" cy="6" r="5.300"/></svg>
<div style="left:657.5px;top:48.5px;width:0;height:0;border-left:2px solid transparent;border-right:2px solid transparent;border-top:2.5px solid #ccc"></div>
<svg class="i" style="left:668px;top:43px" width="13" height="12" viewBox="0 0 13 12"><path d="M.800 11.200L6.300 .800 11.800 11.200M2.800 7.500h7"/></svg>
<div style="left:686px;top:40px;width:1px;height:17px;background:#3e4145;"></div>
<div style="left:690px;top:40px;width:18.5px;height:17.5px;background:#4a4c4f;border:1px solid #606366;border-radius:3px"></div>
<svg class="i" style="left:694px;top:43.5px" width="11" height="11" viewBox="0 0 11 11"><path d="M1 .800V6a4.300 4.300 0 0 0 8.600 0V.800H7V6a1.700 1.700 0 0 1-3.400 0V.800z"/></svg>
<svg class="i" style="left:712px;top:43px" width="12" height="12" viewBox="0 0 12 12"><rect x="2.800" y=".700" width="8.500" height="8" rx="1"/><rect x=".700" y="2.800" width="8.500" height="8.500" rx="1" style="fill:#1d2024"/><path d="M1 6.500h8" /></svg>
<svg class="i d" style="left:732px;top:44px" width="10" height="10" viewBox="0 0 10 10"><path d="M.700 .700l8.600 8.600M9.300 .700L.700 9.300"/></svg>
<svg class="i d" style="left:750px;top:43px" width="11" height="12" viewBox="0 0 11 12"><path d="M.600 3h9.800M3.300 3V1.200h4.400V3M1.700 3l.5 8.200h6.600l.5-8.200M4 5v4M5.500 5v4M7 5v4"/></svg>
<svg class="i" style="left:768px;top:43px" width="13" height="12" viewBox="0 0 13 12"><rect x=".800" y="5" width="11.400" height="6.300" rx="1.800"/><path d="M3.300 5V3.500a3.200 3 0 0 1 6.400 0V5M6.500 7v2"/></svg>
<svg class="i" style="left:788px;top:43px" width="11" height="12" viewBox="0 0 11 12"><path d="M1.500 8L9.500 .800"/></svg>
<div style="left:788px;top:52px;width:10.5px;height:1.5px;background:#1a8aa0;"></div>
<div style="left:804.5px;top:48.5px;width:0;height:0;border-left:2px solid transparent;border-right:2px solid transparent;border-top:2.5px solid #ccc"></div>
<svg class="i" style="left:816px;top:43px" width="12" height="12" viewBox="0 0 12 12"><rect x=".700" y=".700" width="10.600" height="10.600" rx="1.800"/><path d="M3 .700v4h6V.700M.700 6.500h10.600"/></svg>
<div style="left:832.5px;top:48.5px;width:0;height:0;border-left:2px solid transparent;border-right:2px solid transparent;border-top:2.5px solid #ccc"></div>
<div style="left:843px;top:40px;width:1px;height:17px;background:#3e4145;"></div>
<span style="top:43px;font-size:9.5px;line-height:12px;color:#cfcfcf;text-rendering:geometricPrecision;left:851px;">买</span>
<span style="top:43px;font-size:9.5px;line-height:12px;color:#cfcfcf;text-rendering:geometricPrecision;left:869.5px;">卖</span>
<span style="top:43px;font-size:9.5px;line-height:12px;color:#cfcfcf;text-rendering:geometricPrecision;left:888px;">平</span>
<span style="top:43px;font-size:9.5px;line-height:12px;color:#cfcfcf;text-rendering:geometricPrecision;left:906.5px;">反</span>
<div style="left:923.5px;top:51.5px;width:0;height:0;border-left:2px solid transparent;border-right:2px solid transparent;border-top:2.5px solid #ddd"></div>
<svg class="i" style="left:930px;top:5px" width="8" height="8" viewBox="0 0 8 8"><path d="M1 1a6 6 0 0 1 6 6M1 3.700a3.300 3.300 0 0 1 3.300 3.300" style="stroke:#aaa"/><circle cx="1.300" cy="6.700" r=".500" style="fill:#aaa;stroke:#aaa"/></svg>
<svg class="i" style="left:956px;top:3px" width="12" height="12" viewBox="0 0 12 12"><circle cx="6" cy="3.500" r="2.700"/><path d="M.800 11.300c.5-6 9.900-6 10.400 0z"/></svg>
<svg class="i" style="left:985px;top:3px" width="11" height="12" viewBox="0 0 11 12"><rect x=".700" y=".700" width="9.600" height="10.600"/><path d="M3 3.500h5M3 5.500h5M3 7.500h5" style="stroke:#777;stroke-width:.8"/></svg>
<svg class="i" style="left:1014px;top:4px" width="12" height="11" viewBox="0 0 12 11"><path d="M.500 1h1.800l1.700 6h5.800l1.300-4.500H3" style="stroke:#aaa"/><circle cx="4.500" cy="9.300" r=".800" style="stroke:#aaa"/><circle cx="9" cy="9.300" r=".800" style="stroke:#aaa"/></svg>
<svg class="i" style="left:1042px;top:3px" width="12" height="12" viewBox="0 0 12 12"><rect x=".700" y=".700" width="10.600" height="10.600" rx="1"/><path d="M8.500 3c-1.500-.5-2 .3-2.200 1.500L5.500 9.500M4.500 6h3.300" /></svg>
<svg class="i" style="left:1071px;top:3px" width="11" height="12" viewBox="0 0 11 12"><path d="M3.500 3.500V2a1.300 1.300 0 0 1 1.300-1.300h1.700A1.300 1.300 0 0 1 7.800 2v2.700a1.300 1.300 0 0 1-1.300 1.300H4.500a1.300 1.300 0 0 0-1.300 1.300V10a1.300 1.300 0 0 0 1.300 1.300h1.700A1.300 1.300 0 0 0 7.500 10V8.500M3.500 3.500H2A1.300 1.300 0 0 0 .700 4.800v2.400A1.300 1.300 0 0 0 2 8.500h1.200M7.800 3.500H9a1.300 1.300 0 0 1 1.300 1.300v2.400A1.300 1.300 0 0 1 9 8.500H7.500"/></svg>
<svg class="i" style="left:1099px;top:3px" width="12" height="12" viewBox="0 0 12 12"><path d="M2 7V5.500a4 4 0 0 1 8 0V7M2 5.500H1v2.800h1.500zM10 5.500h1v2.800H9.500zM10 8.300c0 2-1.500 2.700-3.500 2.700"/></svg>
<div style="left:1130px;top:11px;width:6px;height:1.5px;background:#e0e0e0;"></div>
<svg class="i" style="left:1158px;top:5px" width="7" height="7" viewBox="0 0 7 7"><path d="M.500 2h4.500v4.500H.500zM2 2V.500h4.500V5H5" style="stroke:#e0e0e0"/></svg>
<svg class="i" style="left:1185px;top:5px" width="7" height="7" viewBox="0 0 7 7"><path d="M.700 .700l5.600 5.600M6.300 .700L.700 6.300" style="stroke:#e8e8e8;stroke-width:1.300"/></svg>
<div style="left:1167px;top:33px;width:5px;height:1.5px;background:#e0e0e0;"></div>
<svg class="i" style="left:1179px;top:27.5px" width="7" height="7" viewBox="0 0 7 7"><path d="M.500 2h4.500v4.500H.500zM2 2V.500h4.500V5H5" style="stroke:#e0e0e0"/></svg>
<svg class="i" style="left:1191px;top:28px" width="6" height="6" viewBox="0 0 6 6"><path d="M.600 .600l4.800 4.800M5.400 .600L.600 5.400" style="stroke:#e8e8e8;stroke-width:1.300"/></svg>
<div style="left:182px;top:59.5px;width:996px;height:541px;background:#000;"></div>
<div style="left:197px;top:69px;width:0;height:0;border-left:4px solid transparent;border-right:4px solid transparent;border-top:4px solid #00c8c8"></div>
<span style="top:66.2px;font-size:10.5px;line-height:13px;color:#00b4b4;text-rendering:geometricPrecision;left:220px;width:21.00px;text-align-last:justify;">代码</span>
<span style="top:66.2px;font-size:10.5px;line-height:13px;color:#00b4b4;text-rendering:geometricPrecision;left:265px;width:21.00px;text-align-last:justify;">名称</span>
<span style="top:66.2px;font-size:10.5px;line-height:13px;color:#00b4b4;text-rendering:geometricPrecision;right:817.5px;width:21.00px;text-align-last:justify;">最新</span>
<span style="top:66.2px;font-size:10.5px;line-height:13px;color:#00b4b4;text-rendering:geometricPrecision;right:772.5px;width:21.00px;text-align-last:justify;">现手</span>
<span style="top:66.2px;font-size:10.5px;line-height:13px;color:#00b4b4;text-rendering:geometricPrecision;right:727.5px;width:31.50px;text-align-last:justify;">委买价</span>
<span style="top:66.2px;font-size:10.5px;line-height:13px;color:#00b4b4;text-rendering:geometricPrecision;right:682.5px;width:31.50px;text-align-last:justify;">委买量</span>
<span style="top:66.2px;font-size:10.5px;line-height:13px;color:#00b4b4;text-rendering:geometricPrecision;right:637.5px;width:31.50px;text-align-last:justify;">委卖价</span>
<span style="top:66.2px;font-size:10.5px;line-height:13px;color:#00b4b4;text-rendering:geometricPrecision;right:592.5px;width:31.50px;text-align-last:justify;">委卖量</span>
<span style="top:66.2px;font-size:10.5px;line-height:13px;color:#00b4b4;text-rendering:geometricPrecision;right:542.5px;width:21.00px;text-align-last:justify;">总手</span>
<span style="top:66.2px;font-size:10.5px;line-height:13px;color:#00b4b4;text-rendering:geometricPrecision;right:497.5px;width:21.00px;text-align-last:justify;">涨幅</span>
<span style="top:66.2px;font-size:10.5px;line-height:13px;color:#00b4b4;text-rendering:geometricPrecision;right:452.5px;width:21.00px;text-align-last:justify;">涨跌</span>
<span style="top:66.2px;font-size:10.5px;line-height:13px;color:#00b4b4;text-rendering:geometricPrecision;right:407.5px;width:21.00px;text-align-last:justify;">振幅</span>
<span style="top:66.2px;font-size:10.5px;line-height:13px;color:#00b4b4;text-rendering:geometricPrecision;right:357.5px;width:31.50px;text-align-last:justify;">持仓量</span>
<span style="top:66.2px;font-size:10.5px;line-height:13px;color:#00b4b4;text-rendering:geometricPrecision;right:312.5px;width:21.00px;text-align-last:justify;">仓差</span>
<span style="top:66.2px;font-size:10.5px;line-height:13px;color:#00b4b4;text-rendering:geometricPrecision;right:267.5px;width:21.00px;text-align-last:justify;">今开</span>
<span style="top:66.2px;font-size:10.5px;line-height:13px;color:#00b4b4;text-rendering:geometricPrecision;right:222.5px;width:21.00px;text-align-last:justify;">最高</span>
<span style="top:66.2px;font-size:10.5px;line-height:13px;color:#00b4b4;text-rendering:geometricPrecision;right:177.5px;width:21.00px;text-align-last:justify;">最低</span>
<span style="top:66.2px;font-size:10.5px;line-height:13px;color:#00b4b4;text-rendering:geometricPrecision;right:132.5px;width:21.00px;text-align-last:justify;">前结</span>
<span style="top:66.2px;font-size:10.5px;line-height:13px;color:#00b4b4;text-rendering:geometricPrecision;right:87.5px;width:21.00px;text-align-last:justify;">量比</span>
<span style="top:66.2px;font-size:10.5px;line-height:13px;color:#00b4b4;text-rendering:geometricPrecision;right:42.5px;width:21.00px;text-align-last:justify;">前收</span>
<div style="left:183px;top:80px;width:982px;height:1px;background:#00a0a0;"></div>
<span style="top:85px;font-size:11.6px;line-height:12px;color:#d6d6d6;font-family:'Liberation Serif',serif;letter-spacing:-.7px;left:149.9px;width:100px;text-align:center;">1</span>
<span style="left:220px;top:85px;font-size:11.6px;line-height:12px;color:#d2d200;font-family:'Liberation Serif',serif;transform:scaleX(0.597);transform-origin:0 50%;">A</span>
<span style="left:225.1px;top:85px;font-size:11.6px;line-height:12px;color:#d2d200;font-family:'Liberation Serif',serif;transform:scaleX(0.597);transform-origin:0 50%;">X</span>
<span style="left:230.2px;top:85px;font-size:11.6px;line-height:12px;color:#d2d200;font-family:'Liberation Serif',serif;">0</span>
<span style="left:235.3px;top:85px;font-size:11.6px;line-height:12px;color:#d2d200;font-family:'Liberation Serif',serif;">0</span>
<span style="top:86.1px;font-size:10.5px;line-height:13px;color:#d2d200;text-rendering:geometricPrecision;left:265px;width:42.00px;text-align-last:justify;">豆一连续</span>
<span style="top:85px;font-size:11.6px;line-height:12px;color:#e23c3c;font-family:'Liberation Serif',serif;letter-spacing:-.7px;right:818.3px;text-align:right;">4195</span>
<span style="top:85px;font-size:11.6px;line-height:12px;color:#d2d200;font-family:'Liberation Serif',serif;letter-spacing:-.7px;right:773.3px;text-align:right;">1</span>
<span style="top:85px;font-size:11.6px;line-height:12px;color:#e23c3c;font-family:'Liberation Serif',serif;letter-spacing:-.7px;right:728.3px;text-align:right;">4194</span>
<span style="top:85px;font-size:11.6px;line-height:12px;color:#d2d200;font-family:'Liberation Serif',serif;letter-spacing:-.7px;right:683.3px;text-align:right;">133</span>
<span style="top:85px;font-size:11.6px;line-height:12px;color:#e23c3c;font-family:'Liberation Serif',serif;letter-spacing:-.7px;right:638.3px;text-align:right;">4195</span>
<span style="top:85px;font-size:11.6px;line-height:12px;color:#d2d200;font-family:'Liberation Serif',serif;letter-spacing:-.7px;right:593.3px;text-align:right;">75</span>
<span style="top:85px;font-size:11.6px;line-height:12px;color:#d2d200;font-family:'Liberation Serif',serif;letter-spacing:-.7px;right:543.3px;text-align:right;">61895</span>
<span style="top:85px;font-size:11.6px;line-height:12px;color:#e23c3c;font-family:'Liberation Serif',serif;letter-spacing:-.7px;right:498.3px;text-align:right;">0<i>.</i>70<b>%</b></span>
<span style="top:85px;font-size:11.6px;line-height:12px;color:#e23c3c;font-family:'Liberation Serif',serif;letter-spacing:-.7px;right:453.3px;text-align:right;">29</span>
<span style="top:85px;font-size:11.6px;line-height:12px;color:#d2d200;font-family:'Liberation Serif',serif;letter-spacing:-.7px;right:408.3px;text-align:right;">0<i>.</i>48<b>%</b></span>
<span style="top:85px;font-size:11.6px;line-height:12px;color:#d2d200;font-family:'Liberation Serif',serif;letter-spacing:-.7px;right:358.3px;text-align:right;">179609</span>
<span style="top:85px;font-size:11.6px;line-height:12px;color:#d2d200;font-family:'Liberation Serif',serif;letter-spacing:-.7px;right:313.3px;text-align:right;">–359</span>
<span style="top:85px;font-size:11.6px;line-height:12px;color:#e23c3c;font-family:'Liberation Serif',serif;letter-spacing:-.7px;right:268.3px;text-align:right;">4179</span>
<span style="top:85px;font-size:11.6px;line-height:12px;color:#e23c3c;font-family:'Liberation Serif',serif;letter-spacing:-.7px;right:223.3px;text-align:right;">4199</span>
<span style="top:85px;font-size:11.6px;line-height:12px;color:#e23c3c;font-family:'Liberation Serif',serif;letter-spacing:-.7px;right:178.3px;text-align:right;">4179</span>
<span style="top:85px;font-size:11.6px;line-height:12px;color:#d6d6d6;font-family:'Liberation Serif',serif;letter-spacing:-.7px;right:133.3px;text-align:right;">4166</span>
<span style="top:85px;font-size:11.6px;line-height:12px;color:#d2d200;font-family:'Liberation Serif',serif;letter-spacing:-.7px;right:88.3px;text-align:right;">1<i>.</i>13</span>
<span style="top:85px;font-size:11.6px;line-height:12px;color:#d6d6d6;font-family:'Liberation Serif',serif;letter-spacing:-.7px;right:43.3px;text-align:right;">4179</span>
<span style="top:104.5px;font-size:11.6px;line-height:12px;color:#d6d6d6;font-family:'Liberation Serif',serif;letter-spacing:-.7px;left:149.9px;width:100px;text-align:center;">2</span>
<span style="left:220px;top:104.5px;font-size:11.6px;line-height:12px;color:#d2d200;font-family:'Liberation Serif',serif;transform:scaleX(0.597);transform-origin:0 50%;">A</span>
<span style="left:225.1px;top:104.5px;font-size:11.6px;line-height:12px;color:#d2d200;font-family:'Liberation Serif',serif;transform:scaleX(0.597);transform-origin:0 50%;">X</span>
<span style="left:230.2px;top:104.5px;font-size:11.6px;line-height:12px;color:#d2d200;font-family:'Liberation Serif',serif;">0</span>
<span style="left:235.3px;top:104.5px;font-size:11.6px;line-height:12px;color:#d2d200;font-family:'Liberation Serif',serif;">1</span>
<span style="top:105.6px;font-size:10.5px;line-height:13px;color:#d2d200;text-rendering:geometricPrecision;left:265px;width:44.36px;text-align-last:justify;">豆一2601</span>
<span style="top:104.5px;font-size:11.6px;line-height:12px;color:#e23c3c;font-family:'Liberation Serif',serif;letter-spacing:-.7px;right:818.3px;text-align:right;">4098</span>
<span style="top:104.5px;font-size:11.6px;line-height:12px;color:#d2d200;font-family:'Liberation Serif',serif;letter-spacing:-.7px;right:773.3px;text-align:right;">1</span>
<span style="top:104.5px;font-size:11.6px;line-height:12px;color:#e23c3c;font-family:'Liberation Serif',serif;letter-spacing:-.7px;right:728.3px;text-align:right;">4096</span>
<span style="top:104.5px;font-size:11.6px;line-height:12px;color:#d2d200;font-family:'Liberation Serif',serif;letter-spacing:-.7px;right:683.3px;text-align:right;">18</span>
<span style="top:104.5px;font-size:11.6px;line-height:12px;color:#e23c3c;font-family:'Liberation Serif',serif;letter-spacing:-.7px;right:638.3px;text-align:right;">4098</span>
<span style="top:104.5px;font-size:11.6px;line-height:12px;color:#d2d200;font-family:'Liberation Serif',serif;letter-spacing:-.7px;right:593.3px;text-align:right;">108</span>
<span style="top:104.5px;font-size:11.6px;line-height:12px;color:#d2d200;font-family:'Liberation Serif',serif;letter-spacing:-.7px;right:543.3px;text-align:right;">4308</span>
<span style="top:104.5px;font-size:11.6px;line-height:12px;color:#e23c3c;font-family:'Liberation Serif',serif;letter-spacing:-.7px;right:498.3px;text-align:right;">0<i>.</i>69<b>%</b></span>
<span style="top:104.5px;font-size:11.6px;line-height:12px;color:#e23c3c;font-family:'Liberation Serif',serif;letter-spacing:-.7px;right:453.3px;text-align:right;">28</span>
<span style="top:104.5px;font-size:11.6px;line-height:12px;color:#d2d200;font-family:'Liberation Serif',serif;letter-spacing:-.7px;right:408.3px;text-align:right;">0<i>.</i>49<b>%</b></span>
<span style="top:104.5px;font-size:11.6px;line-height:12px;color:#d2d200;font-family:'Liberation Serif',serif;letter-spacing:-.7px;right:358.3px;text-align:right;">26749</span>
<span style="top:104.5px;font-size:11.6px;line-height:12px;color:#d2d200;font-family:'Liberation Serif',serif;letter-spacing:-.7px;right:313.3px;text-align:right;">335</span>
<span style="top:104.5px;font-size:11.6px;line-height:12px;color:#e23c3c;font-family:'Liberation Serif',serif;letter-spacing:-.7px;right:268.3px;text-align:right;">4081</span>
<span style="top:104.5px;font-size:11.6px;line-height:12px;color:#e23c3c;font-family:'Liberation Serif',serif;letter-spacing:-.7px;right:223.3px;text-align:right;">4100</span>
<span style="top:104.5px;font-size:11.6px;line-height:12px;color:#e23c3c;font-family:'Liberation Serif',serif;letter-spacing:-.7px;right:178.3px;text-align:right;">4080</span>
<span style="top:104.5px;font-size:11.6px;line-height:12px;color:#d6d6d6;font-family:'Liberation Serif',serif;letter-spacing:-.7px;right:133.3px;text-align:right;">4070</span>
<span style="top:104.5px;font-size:11.6px;line-height:12px;color:#d2d200;font-family:'Liberation Serif',serif;letter-spacing:-.7px;right:88.3px;text-align:right;">1<i>.</i>31</span>
<span style="top:104.5px;font-size:11.6px;line-height:12px;color:#d6d6d6;font-family:'Liberation Serif',serif;letter-spacing:-.7px;right:43.3px;text-align:right;">4081</span>
<span style="top:124px;font-size:11.6px;line-height:12px;color:#d6d6d6;font-family:'Liberation Serif',serif;letter-spacing:-.7px;left:149.9px;width:100px;text-align:center;">3</span>
<span style="left:220px;top:124px;font-size:11.6px;line-height:12px;color:#d2d200;font-family:'Liberation Serif',serif;transform:scaleX(0.597);transform-origin:0 50%;">A</span>
<span style="left:225.1px;top:124px;font-size:11.6px;line-height:12px;color:#d2d200;font-family:'Liberation Serif',serif;transform:scaleX(0.597);transform-origin:0 50%;">X</span>
<span style="left:230.2px;top:124px;font-size:11.6px;line-height:12px;color:#d2d200;font-family:'Liberation Serif',serif;">0</span>
<span style="left:235.3px;top:124px;font-size:11.6px;line-height:12px;color:#d2d200;font-family:'Liberation Serif',serif;">3</span>
<span style="top:125.1px;font-size:10.5px;line-height:13px;color:#d2d200;text-rendering:geometricPrecision;left:265px;width:44.36px;text-align-last:justify;">豆一2603</span>
<span style="top:124px;font-size:11.6px;line-height:12px;color:#d2d200;font-family:'Liberation Serif',serif;letter-spacing:-.7px;right:88.3px;text-align:right;">0<i>.</i>95</span>
<span style="top:124px;font-size:11.6px;line-height:12px;color:#d6d6d6;font-family:'Liberation Serif',serif;letter-spacing:-.7px;right:43.3px;text-align:right;">4070</span>
<span style="top:143.5px;font-size:11.6px;line-height:12px;color:#d6d6d6;font-family:'Liberation Serif',serif;letter-spacing:-.7px;left:149.9px;width:100px;text-align:center;">4</span>
<span style="left:220px;top:143.5px;font-size:11.6px;line-height:12px;color:#d2d200;font-family:'Liberation Serif',serif;transform:scaleX(0.597);transform-origin:0 50%;">A</span>
<span style="left:225.1px;top:143.5px;font-size:11.6px;line-height:12px;color:#d2d200;font-family:'Liberation Serif',serif;transform:scaleX(0.597);transform-origin:0 50%;">X</span>
<span style="left:230.2px;top:143.5px;font-size:11.6px;line-height:12px;color:#d2d200;font-family:'Liberation Serif',serif;">0</span>
<span style="left:235.3px;top:143.5px;font-size:11.6px;line-height:12px;color:#d2d200;font-family:'Liberation Serif',serif;">5</span>
<span style="top:144.6px;font-size:10.5px;line-height:13px;color:#d2d200;text-rendering:geometricPrecision;left:265px;width:44.36px;text-align-last:justify;">豆一2605</span>
<span style="top:143.5px;font-size:11.6px;line-height:12px;color:#d2d200;font-family:'Liberation Serif',serif;letter-spacing:-.7px;right:88.3px;text-align:right;">2<i>.</i>29</span>
<span style="top:143.5px;font-size:11.6px;line-height:12px;color:#d6d6d6;font-family:'Liberation Serif',serif;letter-spacing:-.7px;right:43.3px;text-align:right;">4102</span>
<span style="top:163px;font-size:11.6px;line-height:12px;color:#d6d6d6;font-family:'Liberation Serif',serif;letter-spacing:-.7px;left:149.9px;width:100px;text-align:center;">5</span>
<span style="left:220px;top:163px;font-size:11.6px;line-height:12px;color:#d2d200;font-family:'Liberation Serif',serif;transform:scaleX(0.597);transform-origin:0 50%;">A</span>
<span style="left:225.1px;top:163px;font-size:11.6px;line-height:12px;color:#d2d200;font-family:'Liberation Serif',serif;transform:scaleX(0.597);transform-origin:0 50%;">X</span>
<span style="left:230.2px;top:163px;font-size:11.6px;line-height:12px;color:#d2d200;font-family:'Liberation Serif',serif;">0</span>
<span style="left:235.3px;top:163px;font-size:11.6px;line-height:12px;color:#d2d200;font-family:'Liberation Serif',serif;">7</span>
<span style="top:164.1px;font-size:10.5px;line-height:13px;color:#d2d200;text-rendering:geometricPrecision;left:265px;width:44.36px;text-align-last:justify;">豆一2607</span>
<span style="top:163px;font-size:11.6px;line-height:12px;color:#d2d200;font-family:'Liberation Serif',serif;letter-spacing:-.7px;right:88.3px;text-align:right;">12<i>.</i>66</span>
<span style="top:163px;font-size:11.6px;line-height:12px;color:#d6d6d6;font-family:'Liberation Serif',serif;letter-spacing:-.7px;right:43.3px;text-align:right;">4105</span>
<span style="top:182.5px;font-size:11.6px;line-height:12px;color:#d6d6d6;font-family:'Liberation Serif',serif;letter-spacing:-.7px;left:149.9px;width:100px;text-align:center;">6</span>
<span style="left:220px;top:182.5px;font-size:11.6px;line-height:12px;color:#d2d200;font-family:'Liberation Serif',serif;transform:scaleX(0.597);transform-origin:0 50%;">A</span>
<span style="left:225.1px;top:182.5px;font-size:11.6px;line-height:12px;color:#d2d200;font-family:'Liberation Serif',serif;transform:scaleX(0.597);transform-origin:0 50%;">X</span>
<span style="left:230.2px;top:182.5px;font-size:11.6px;line-height:12px;color:#d2d200;font-family:'Liberation Serif',serif;">0</span>
<span style="left:235.3px;top:182.5px;font-size:11.6px;line-height:12px;color:#d2d200;font-family:'Liberation Serif',serif;">9</span>
<span style="top:183.6px;font-size:10.5px;line-height:13px;color:#d2d200;text-rendering:geometricPrecision;left:265px;width:44.36px;text-align-last:justify;">豆一2409</span>
<div style="left:1104px;top:187.5px;width:6px;height:1px;background:#d2d200;"></div>
<span style="top:182.5px;font-size:11.6px;line-height:12px;color:#d6d6d6;font-family:'Liberation Serif',serif;letter-spacing:-.7px;right:43.3px;text-align:right;">4438</span>
<span style="top:202px;font-size:11.6px;line-height:12px;color:#d6d6d6;font-family:'Liberation Serif',serif;letter-spacing:-.7px;left:149.9px;width:100px;text-align:center;">7</span>
<span style="left:220px;top:202px;font-size:11.6px;line-height:12px;color:#d2d200;font-family:'Liberation Serif',serif;transform:scaleX(0.597);transform-origin:0 50%;">A</span>
<span style="left:225.1px;top:202px;font-size:11.6px;line-height:12px;color:#d2d200;font-family:'Liberation Serif',serif;transform:scaleX(0.597);transform-origin:0 50%;">X</span>
<span style="left:230.2px;top:202px;font-size:11.6px;line-height:12px;color:#d2d200;font-family:'Liberation Serif',serif;">1</span>
<span style="left:235.3px;top:202px;font-size:11.6px;line-height:12px;color:#d2d200;font-family:'Liberation Serif',serif;">1</span>
<span style="top:203.1px;font-size:10.5px;line-height:13px;color:#d2d200;text-rendering:geometricPrecision;left:265px;width:44.36px;text-align-last:justify;">豆一2411</span>
<div style="left:1104px;top:207.0px;width:6px;height:1px;background:#d2d200;"></div>
<span style="top:202px;font-size:11.6px;line-height:12px;color:#d6d6d6;font-family:'Liberation Serif',serif;letter-spacing:-.7px;right:43.3px;text-align:right;">4026</span>
<span style="top:221.5px;font-size:11.6px;line-height:12px;color:#d6d6d6;font-family:'Liberation Serif',serif;letter-spacing:-.7px;left:149.9px;width:100px;text-align:center;">8</span>
<span style="left:220px;top:221.5px;font-size:11.6px;line-height:12px;color:#d2d200;font-family:'Liberation Serif',serif;transform:scaleX(0.597);transform-origin:0 50%;">A</span>
<span style="left:225.1px;top:221.5px;font-size:11.6px;line-height:12px;color:#d2d200;font-family:'Liberation Serif',serif;transform:scaleX(0.597);transform-origin:0 50%;">X</span>
<span style="left:230.2px;top:221.5px;font-size:11.6px;line-height:12px;color:#d2d200;font-family:'Liberation Serif',serif;">1</span>
<span style="left:235.3px;top:221.5px;font-size:11.6px;line-height:12px;color:#d2d200;font-family:'Liberation Serif',serif;">3</span>
<span style="top:222.6px;font-size:10.5px;line-height:13px;color:#d2d200;text-rendering:geometricPrecision;left:265px;width:42.00px;text-align-last:justify;">豆一加权</span>
<span style="top:221.5px;font-size:11.6px;line-height:12px;color:#d2d200;font-family:'Liberation Serif',serif;letter-spacing:-.7px;right:88.3px;text-align:right;">1<i>.</i>13</span>
<span style="top:221.5px;font-size:11.6px;line-height:12px;color:#d6d6d6;font-family:'Liberation Serif',serif;letter-spacing:-.7px;right:43.3px;text-align:right;">4142</span>
<span style="top:241px;font-size:11.6px;line-height:12px;color:#d6d6d6;font-family:'Liberation Serif',serif;letter-spacing:-.7px;left:149.9px;width:100px;text-align:center;">9</span>
<span style="left:220px;top:241px;font-size:11.6px;line-height:12px;color:#d2d200;font-family:'Liberation Serif',serif;transform:scaleX(0.597);transform-origin:0 50%;">A</span>
<span style="left:225.1px;top:241px;font-size:11.6px;line-height:12px;color:#d2d200;font-family:'Liberation Serif',serif;transform:scaleX(0.597);transform-origin:0 50%;">Y</span>
<span style="left:230.2px;top:241px;font-size:11.6px;line-height:12px;color:#d2d200;font-family:'Liberation Serif',serif;">0</span>
<span style="left:235.3px;top:241px;font-size:11.6px;line-height:12px;color:#d2d200;font-family:'Liberation Serif',serif;">1</span>
<span style="top:242.1px;font-size:10.5px;line-height:13px;color:#d2d200;text-rendering:geometricPrecision;left:265px;width:44.36px;text-align-last:justify;">豆一2501</span>
<div style="left:1104px;top:246.0px;width:6px;height:1px;background:#d2d200;"></div>
<span style="top:241px;font-size:11.6px;line-height:12px;color:#d6d6d6;font-family:'Liberation Serif',serif;letter-spacing:-.7px;right:43.3px;text-align:right;">3890</span>
<span style="top:260.5px;font-size:11.6px;line-height:12px;color:#d6d6d6;font-family:'Liberation Serif',serif;letter-spacing:-.7px;left:149.9px;width:100px;text-align:center;">10</span>
<span style="left:220px;top:260.5px;font-size:11.6px;line-height:12px;color:#d2d200;font-family:'Liberation Serif',serif;transform:scaleX(0.597);transform-origin:0 50%;">A</span>
<span style="left:225.1px;top:260.5px;font-size:11.6px;line-height:12px;color:#d2d200;font-family:'Liberation Serif',serif;transform:scaleX(0.597);transform-origin:0 50%;">Y</span>
<span style="left:230.2px;top:260.5px;font-size:11.6px;line-height:12px;color:#d2d200;font-family:'Liberation Serif',serif;">0</span>
<span style="left:235.3px;top:260.5px;font-size:11.6px;line-height:12px;color:#d2d200;font-family:'Liberation Serif',serif;">3</span>
<span style="top:261.6px;font-size:10.5px;line-height:13px;color:#d2d200;text-rendering:geometricPrecision;left:265px;width:44.36px;text-align-last:justify;">豆一2503</span>
<div style="left:1104px;top:265.5px;width:6px;height:1px;background:#d2d200;"></div>
<span style="top:260.5px;font-size:11.6px;line-height:12px;color:#d6d6d6;font-family:'Liberation Serif',serif;letter-spacing:-.7px;right:43.3px;text-align:right;">4086</span>
<span style="top:280px;font-size:11.6px;line-height:12px;color:#d6d6d6;font-family:'Liberation Serif',serif;letter-spacing:-.7px;left:149.9px;width:100px;text-align:center;">11</span>
<span style="left:220px;top:280px;font-size:11.6px;line-height:12px;color:#d2d200;font-family:'Liberation Serif',serif;transform:scaleX(0.597);transform-origin:0 50%;">A</span>
<span style="left:225.1px;top:280px;font-size:11.6px;line-height:12px;color:#d2d200;font-family:'Liberation Serif',serif;transform:scaleX(0.597);transform-origin:0 50%;">Y</span>
<span style="left:230.2px;top:280px;font-size:11.6px;line-height:12px;color:#d2d200;font-family:'Liberation Serif',serif;">0</span>
<span style="left:235.3px;top:280px;font-size:11.6px;line-height:12px;color:#d2d200;font-family:'Liberation Serif',serif;">5</span>
<span style="top:281.1px;font-size:10.5px;line-height:13px;color:#d2d200;text-rendering:geometricPrecision;left:265px;width:44.36px;text-align-last:justify;">豆一2505</span>
<div style="left:1104px;top:285.0px;width:6px;height:1px;background:#d2d200;"></div>
<span style="top:280px;font-size:11.6px;line-height:12px;color:#d6d6d6;font-family:'Liberation Serif',serif;letter-spacing:-.7px;right:43.3px;text-align:right;">4117</span>
<span style="top:299.5px;font-size:11.6px;line-height:12px;color:#d6d6d6;font-family:'Liberation Serif',serif;letter-spacing:-.7px;left:149.9px;width:100px;text-align:center;">12</span>
<span style="left:220px;top:299.5px;font-size:11.6px;line-height:12px;color:#d2d200;font-family:'Liberation Serif',serif;transform:scaleX(0.597);transform-origin:0 50%;">A</span>
<span style="left:225.1px;top:299.5px;font-size:11.6px;line-height:12px;color:#d2d200;font-family:'Liberation Serif',serif;transform:scaleX(0.597);transform-origin:0 50%;">Y</span>
<span style="left:230.2px;top:299.5px;font-size:11.6px;line-height:12px;color:#d2d200;font-family:'Liberation Serif',serif;">0</span>
<span style="left:235.3px;top:299.5px;font-size:11.6px;line-height:12px;color:#d2d200;font-family:'Liberation Serif',serif;">7</span>
<span style="top:300.6px;font-size:10.5px;line-height:13px;color:#d2d200;text-rendering:geometricPrecision;left:265px;width:44.36px;text-align-last:justify;">豆一2507</span>
<div style="left:1104px;top:304.5px;width:6px;height:1px;background:#d2d200;"></div>
<span style="top:299.5px;font-size:11.6px;line-height:12px;color:#d6d6d6;font-family:'Liberation Serif',serif;letter-spacing:-.7px;right:43.3px;text-align:right;">4170</span>
<span style="top:319px;font-size:11.6px;line-height:12px;color:#d6d6d6;font-family:'Liberation Serif',serif;letter-spacing:-.7px;left:149.9px;width:100px;text-align:center;">13</span>
<span style="left:220px;top:319px;font-size:11.6px;line-height:12px;color:#d2d200;font-family:'Liberation Serif',serif;transform:scaleX(0.597);transform-origin:0 50%;">A</span>
<span style="left:225.1px;top:319px;font-size:11.6px;line-height:12px;color:#d2d200;font-family:'Liberation Serif',serif;transform:scaleX(0.597);transform-origin:0 50%;">Y</span>
<span style="left:230.2px;top:319px;font-size:11.6px;line-height:12px;color:#d2d200;font-family:'Liberation Serif',serif;">0</span>
<span style="left:235.3px;top:319px;font-size:11.6px;line-height:12px;color:#d2d200;font-family:'Liberation Serif',serif;">9</span>
<span style="top:320.1px;font-size:10.5px;line-height:13px;color:#d2d200;text-rendering:geometricPrecision;left:265px;width:44.36px;text-align-last:justify;">豆一2509</span>
<span style="top:319px;font-size:11.6px;line-height:12px;color:#d2d200;font-family:'Liberation Serif',serif;letter-spacing:-.7px;right:88.3px;text-align:right;">1<i>.</i>13</span>
<span style="top:319px;font-size:11.6px;line-height:12px;color:#d6d6d6;font-family:'Liberation Serif',serif;letter-spacing:-.7px;right:43.3px;text-align:right;">4179</span>
<span style="top:317px;font-size:8px;line-height:8px;color:#c81e1e;font-family:'Liberation Serif',serif;left:314.3px;transform:scaleX(.72);transform-origin:0 50%;">M</span>
<span style="top:338.5px;font-size:11.6px;line-height:12px;color:#d6d6d6;font-family:'Liberation Serif',serif;letter-spacing:-.7px;left:149.9px;width:100px;text-align:center;">14</span>
<span style="left:220px;top:338.5px;font-size:11.6px;line-height:12px;color:#d2d200;font-family:'Liberation Serif',serif;transform:scaleX(0.597);transform-origin:0 50%;">A</span>
<span style="left:225.1px;top:338.5px;font-size:11.6px;line-height:12px;color:#d2d200;font-family:'Liberation Serif',serif;transform:scaleX(0.597);transform-origin:0 50%;">Y</span>
<span style="left:230.2px;top:338.5px;font-size:11.6px;line-height:12px;color:#d2d200;font-family:'Liberation Serif',serif;">1</span>
<span style="left:235.3px;top:338.5px;font-size:11.6px;line-height:12px;color:#d2d200;font-family:'Liberation Serif',serif;">1</span>
<span style="top:339.6px;font-size:10.5px;line-height:13px;color:#d2d200;text-rendering:geometricPrecision;left:265px;width:44.36px;text-align-last:justify;">豆一2511</span>
<span style="top:338.5px;font-size:11.6px;line-height:12px;color:#d2d200;font-family:'Liberation Serif',serif;letter-spacing:-.7px;right:88.3px;text-align:right;">0<i>.</i>99</span>
<span style="top:338.5px;font-size:11.6px;line-height:12px;color:#d6d6d6;font-family:'Liberation Serif',serif;letter-spacing:-.7px;right:43.3px;text-align:right;">4091</span>
<span style="top:358px;font-size:11.6px;line-height:12px;color:#d6d6d6;font-family:'Liberation Serif',serif;letter-spacing:-.7px;left:149.9px;width:100px;text-align:center;">15</span>
<span style="left:220px;top:358px;font-size:11.6px;line-height:12px;color:#d2d200;font-family:'Liberation Serif',serif;transform:scaleX(0.646);transform-origin:0 50%;">B</span>
<span style="left:225.1px;top:358px;font-size:11.6px;line-height:12px;color:#d2d200;font-family:'Liberation Serif',serif;">0</span>
<span style="left:230.2px;top:358px;font-size:11.6px;line-height:12px;color:#d2d200;font-family:'Liberation Serif',serif;">0</span>
<span style="top:359.1px;font-size:10.5px;line-height:13px;color:#d2d200;text-rendering:geometricPrecision;left:265px;width:42.00px;text-align-last:justify;">豆二连续</span>
<span style="top:358px;font-size:11.6px;line-height:12px;color:#d2d200;font-family:'Liberation Serif',serif;letter-spacing:-.7px;right:88.3px;text-align:right;">1<i>.</i>57</span>
<span style="top:358px;font-size:11.6px;line-height:12px;color:#d6d6d6;font-family:'Liberation Serif',serif;letter-spacing:-.7px;right:43.3px;text-align:right;">3630</span>
<span style="top:377.5px;font-size:11.6px;line-height:12px;color:#d6d6d6;font-family:'Liberation Serif',serif;letter-spacing:-.7px;left:149.9px;width:100px;text-align:center;">16</span>
<span style="left:220px;top:377.5px;font-size:11.6px;line-height:12px;color:#d2d200;font-family:'Liberation Serif',serif;transform:scaleX(0.646);transform-origin:0 50%;">B</span>
<span style="left:225.1px;top:377.5px;font-size:11.6px;line-height:12px;color:#d2d200;font-family:'Liberation Serif',serif;">0</span>
<span style="left:230.2px;top:377.5px;font-size:11.6px;line-height:12px;color:#d2d200;font-family:'Liberation Serif',serif;">1</span>
<span style="top:378.6px;font-size:10.5px;line-height:13px;color:#d2d200;text-rendering:geometricPrecision;left:265px;width:44.36px;text-align-last:justify;">豆二2601</span>
<span style="top:377.5px;font-size:11.6px;line-height:12px;color:#d2d200;font-family:'Liberation Serif',serif;letter-spacing:-.7px;right:88.3px;text-align:right;">1<i>.</i>04</span>
<span style="top:377.5px;font-size:11.6px;line-height:12px;color:#d6d6d6;font-family:'Liberation Serif',serif;letter-spacing:-.7px;right:43.3px;text-align:right;">3686</span>
<span style="top:397px;font-size:11.6px;line-height:12px;color:#d6d6d6;font-family:'Liberation Serif',serif;letter-spacing:-.7px;left:149.9px;width:100px;text-align:center;">17</span>
<span style="left:220px;top:397px;font-size:11.6px;line-height:12px;color:#d2d200;font-family:'Liberation Serif',serif;transform:scaleX(0.646);transform-origin:0 50%;">B</span>
<span style="left:225.1px;top:397px;font-size:11.6px;line-height:12px;color:#d2d200;font-family:'Liberation Serif',serif;">0</span>
<span style="left:230.2px;top:397px;font-size:11.6px;line-height:12px;color:#d2d200;font-family:'Liberation Serif',serif;">2</span>
<span style="top:398.1px;font-size:10.5px;line-height:13px;color:#d2d200;text-rendering:geometricPrecision;left:265px;width:44.36px;text-align-last:justify;">豆二2602</span>
<span style="top:397px;font-size:11.6px;line-height:12px;color:#d2d200;font-family:'Liberation Serif',serif;letter-spacing:-.7px;right:88.3px;text-align:right;">0<i>.</i>37</span>
<span style="top:397px;font-size:11.6px;line-height:12px;color:#d6d6d6;font-family:'Liberation Serif',serif;letter-spacing:-.7px;right:43.3px;text-align:right;">3647</span>
<span style="top:416.5px;font-size:11.6px;line-height:12px;color:#d6d6d6;font-family:'Liberation Serif',serif;letter-spacing:-.7px;left:149.9px;width:100px;text-align:center;">18</span>
<span style="left:220px;top:416.5px;font-size:11.6px;line-height:12px;color:#d2d200;font-family:'Liberation Serif',serif;transform:scaleX(0.646);transform-origin:0 50%;">B</span>
<span style="left:225.1px;top:416.5px;font-size:11.6px;line-height:12px;color:#d2d200;font-family:'Liberation Serif',serif;">0</span>
<span style="left:230.2px;top:416.5px;font-size:11.6px;line-height:12px;color:#d2d200;font-family:'Liberation Serif',serif;">3</span>
<span style="top:417.6px;font-size:10.5px;line-height:13px;color:#d2d200;text-rendering:geometricPrecision;left:265px;width:44.36px;text-align-last:justify;">豆二2603</span>
<span style="top:416.5px;font-size:11.6px;line-height:12px;color:#d2d200;font-family:'Liberation Serif',serif;letter-spacing:-.7px;right:88.3px;text-align:right;">0<i>.</i>73</span>
<span style="top:416.5px;font-size:11.6px;line-height:12px;color:#d6d6d6;font-family:'Liberation Serif',serif;letter-spacing:-.7px;right:43.3px;text-align:right;">3552</span>
<span style="top:436px;font-size:11.6px;line-height:12px;color:#d6d6d6;font-family:'Liberation Serif',serif;letter-spacing:-.7px;left:149.9px;width:100px;text-align:center;">19</span>
<span style="left:220px;top:436px;font-size:11.6px;line-height:12px;color:#d2d200;font-family:'Liberation Serif',serif;transform:scaleX(0.646);transform-origin:0 50%;">B</span>
<span style="left:225.1px;top:436px;font-size:11.6px;line-height:12px;color:#d2d200;font-family:'Liberation Serif',serif;">0</span>
<span style="left:230.2px;top:436px;font-size:11.6px;line-height:12px;color:#d2d200;font-family:'Liberation Serif',serif;">4</span>
<span style="top:437.1px;font-size:10.5px;line-height:13px;color:#d2d200;text-rendering:geometricPrecision;left:265px;width:44.36px;text-align-last:justify;">豆二2604</span>
<span style="top:436px;font-size:11.6px;line-height:12px;color:#d2d200;font-family:'Liberation Serif',serif;letter-spacing:-.7px;right:88.3px;text-align:right;">0<i>.</i>66</span>
<span style="top:436px;font-size:11.6px;line-height:12px;color:#d6d6d6;font-family:'Liberation Serif',serif;letter-spacing:-.7px;right:43.3px;text-align:right;">3454</span>
<span style="top:455.5px;font-size:11.6px;line-height:12px;color:#d6d6d6;font-family:'Liberation Serif',serif;letter-spacing:-.7px;left:149.9px;width:100px;text-align:center;">20</span>
<span style="left:220px;top:455.5px;font-size:11.6px;line-height:12px;color:#d2d200;font-family:'Liberation Serif',serif;transform:scaleX(0.646);transform-origin:0 50%;">B</span>
<span style="left:225.1px;top:455.5px;font-size:11.6px;line-height:12px;color:#d2d200;font-family:'Liberation Serif',serif;">0</span>
<span style="left:230.2px;top:455.5px;font-size:11.6px;line-height:12px;color:#d2d200;font-family:'Liberation Serif',serif;">5</span>
<span style="top:456.6px;font-size:10.5px;line-height:13px;color:#d2d200;text-rendering:geometricPrecision;left:265px;width:44.36px;text-align-last:justify;">豆二2605</span>
<span style="top:455.5px;font-size:11.6px;line-height:12px;color:#d2d200;font-family:'Liberation Serif',serif;letter-spacing:-.7px;right:88.3px;text-align:right;">1<i>.</i>64</span>
<span style="top:455.5px;font-size:11.6px;line-height:12px;color:#d6d6d6;font-family:'Liberation Serif',serif;letter-spacing:-.7px;right:43.3px;text-align:right;">3383</span>
<span style="top:475px;font-size:11.6px;line-height:12px;color:#d6d6d6;font-family:'Liberation Serif',serif;letter-spacing:-.7px;left:149.9px;width:100px;text-align:center;">21</span>
<span style="left:220px;top:475px;font-size:11.6px;line-height:12px;color:#d2d200;font-family:'Liberation Serif',serif;transform:scaleX(0.646);transform-origin:0 50%;">B</span>
<span style="left:225.1px;top:475px;font-size:11.6px;line-height:12px;color:#d2d200;font-family:'Liberation Serif',serif;">0</span>
<span style="left:230.2px;top:475px;font-size:11.6px;line-height:12px;color:#d2d200;font-family:'Liberation Serif',serif;">6</span>
<span style="top:476.1px;font-size:10.5px;line-height:13px;color:#d2d200;text-rendering:geometricPrecision;left:265px;width:44.36px;text-align-last:justify;">豆二2606</span>
<span style="top:475px;font-size:11.6px;line-height:12px;color:#d2d200;font-family:'Liberation Serif',serif;letter-spacing:-.7px;right:88.3px;text-align:right;">0<i>.</i>32</span>
<span style="top:475px;font-size:11.6px;line-height:12px;color:#d6d6d6;font-family:'Liberation Serif',serif;letter-spacing:-.7px;right:43.3px;text-align:right;">3377</span>
<span style="top:494.5px;font-size:11.6px;line-height:12px;color:#d6d6d6;font-family:'Liberation Serif',serif;letter-spacing:-.7px;left:149.9px;width:100px;text-align:center;">22</span>
<span style="left:220px;top:494.5px;font-size:11.6px;line-height:12px;color:#d2d200;font-family:'Liberation Serif',serif;transform:scaleX(0.646);transform-origin:0 50%;">B</span>
<span style="left:225.1px;top:494.5px;font-size:11.6px;line-height:12px;color:#d2d200;font-family:'Liberation Serif',serif;">0</span>
<span style="left:230.2px;top:494.5px;font-size:11.6px;line-height:12px;color:#d2d200;font-family:'Liberation Serif',serif;">7</span>
<span style="top:495.6px;font-size:10.5px;line-height:13px;color:#d2d200;text-rendering:geometricPrecision;left:265px;width:44.36px;text-align-last:justify;">豆二2607</span>
<span style="top:494.5px;font-size:11.6px;line-height:12px;color:#d2d200;font-family:'Liberation Serif',serif;letter-spacing:-.7px;right:88.3px;text-align:right;">0<i>.</i>23</span>
<span style="top:494.5px;font-size:11.6px;line-height:12px;color:#d6d6d6;font-family:'Liberation Serif',serif;letter-spacing:-.7px;right:43.3px;text-align:right;">3380</span>
<span style="top:514px;font-size:11.6px;line-height:12px;color:#d6d6d6;font-family:'Liberation Serif',serif;letter-spacing:-.7px;left:149.9px;width:100px;text-align:center;">23</span>
<span style="left:220px;top:514px;font-size:11.6px;line-height:12px;color:#d2d200;font-family:'Liberation Serif',serif;transform:scaleX(0.646);transform-origin:0 50%;">B</span>
<span style="left:225.1px;top:514px;font-size:11.6px;line-height:12px;color:#d2d200;font-family:'Liberation Serif',serif;">0</span>
<span style="left:230.2px;top:514px;font-size:11.6px;line-height:12px;color:#d2d200;font-family:'Liberation Serif',serif;">8</span>
<span style="top:515.1px;font-size:10.5px;line-height:13px;color:#d2d200;text-rendering:geometricPrecision;left:265px;width:44.36px;text-align-last:justify;">豆二2508</span>
<span style="top:514px;font-size:11.6px;line-height:12px;color:#e23c3c;font-family:'Liberation Serif',serif;letter-spacing:-.7px;right:818.3px;text-align:right;">3591</span>
<span style="top:514px;font-size:11.6px;line-height:12px;color:#d2d200;font-family:'Liberation Serif',serif;letter-spacing:-.7px;right:773.3px;text-align:right;">5</span>
<span style="top:514px;font-size:11.6px;line-height:12px;color:#e23c3c;font-family:'Liberation Serif',serif;letter-spacing:-.7px;right:728.3px;text-align:right;">3590</span>
<span style="top:514px;font-size:11.6px;line-height:12px;color:#d2d200;font-family:'Liberation Serif',serif;letter-spacing:-.7px;right:683.3px;text-align:right;">7</span>
<span style="top:514px;font-size:11.6px;line-height:12px;color:#e23c3c;font-family:'Liberation Serif',serif;letter-spacing:-.7px;right:638.3px;text-align:right;">3592</span>
<span style="top:514px;font-size:11.6px;line-height:12px;color:#d2d200;font-family:'Liberation Serif',serif;letter-spacing:-.7px;right:593.3px;text-align:right;">5</span>
<span style="top:514px;font-size:11.6px;line-height:12px;color:#d2d200;font-family:'Liberation Serif',serif;letter-spacing:-.7px;right:543.3px;text-align:right;">4274</span>
<span style="top:514px;font-size:11.6px;line-height:12px;color:#e23c3c;font-family:'Liberation Serif',serif;letter-spacing:-.7px;right:498.3px;text-align:right;">0<i>.</i>90<b>%</b></span>
<span style="top:514px;font-size:11.6px;line-height:12px;color:#e23c3c;font-family:'Liberation Serif',serif;letter-spacing:-.7px;right:453.3px;text-align:right;">32</span>
<span style="top:514px;font-size:11.6px;line-height:12px;color:#d2d200;font-family:'Liberation Serif',serif;letter-spacing:-.7px;right:408.3px;text-align:right;">1<i>.</i>29<b>%</b></span>
<span style="top:514px;font-size:11.6px;line-height:12px;color:#d2d200;font-family:'Liberation Serif',serif;letter-spacing:-.7px;right:358.3px;text-align:right;">20529</span>
<span style="top:514px;font-size:11.6px;line-height:12px;color:#d2d200;font-family:'Liberation Serif',serif;letter-spacing:-.7px;right:313.3px;text-align:right;">–1609</span>
<span style="top:514px;font-size:11.6px;line-height:12px;color:#00a800;font-family:'Liberation Serif',serif;letter-spacing:-.7px;right:268.3px;text-align:right;">3558</span>
<span style="top:514px;font-size:11.6px;line-height:12px;color:#e23c3c;font-family:'Liberation Serif',serif;letter-spacing:-.7px;right:223.3px;text-align:right;">3600</span>
<span style="top:514px;font-size:11.6px;line-height:12px;color:#00a800;font-family:'Liberation Serif',serif;letter-spacing:-.7px;right:178.3px;text-align:right;">3554</span>
<span style="top:514px;font-size:11.6px;line-height:12px;color:#d6d6d6;font-family:'Liberation Serif',serif;letter-spacing:-.7px;right:133.3px;text-align:right;">3559</span>
<span style="top:514px;font-size:11.6px;line-height:12px;color:#d2d200;font-family:'Liberation Serif',serif;letter-spacing:-.7px;right:88.3px;text-align:right;">0<i>.</i>75</span>
<span style="top:514px;font-size:11.6px;line-height:12px;color:#d6d6d6;font-family:'Liberation Serif',serif;letter-spacing:-.7px;right:43.3px;text-align:right;">3556</span>
<span style="top:533.5px;font-size:11.6px;line-height:12px;color:#d6d6d6;font-family:'Liberation Serif',serif;letter-spacing:-.7px;left:149.9px;width:100px;text-align:center;">24</span>
<span style="left:220px;top:533.5px;font-size:11.6px;line-height:12px;color:#d2d200;font-family:'Liberation Serif',serif;transform:scaleX(0.646);transform-origin:0 50%;">B</span>
<span style="left:225.1px;top:533.5px;font-size:11.6px;line-height:12px;color:#d2d200;font-family:'Liberation Serif',serif;">0</span>
<span style="left:230.2px;top:533.5px;font-size:11.6px;line-height:12px;color:#d2d200;font-family:'Liberation Serif',serif;">9</span>
<span style="top:534.6px;font-size:10.5px;line-height:13px;color:#d2d200;text-rendering:geometricPrecision;left:265px;width:44.36px;text-align-last:justify;">豆二2509</span>
<span style="top:533.5px;font-size:11.6px;line-height:12px;color:#e23c3c;font-family:'Liberation Serif',serif;letter-spacing:-.7px;right:818.3px;text-align:right;">3666</span>
<span style="top:533.5px;font-size:11.6px;line-height:12px;color:#d2d200;font-family:'Liberation Serif',serif;letter-spacing:-.7px;right:773.3px;text-align:right;">3</span>
<span style="top:533.5px;font-size:11.6px;line-height:12px;color:#e23c3c;font-family:'Liberation Serif',serif;letter-spacing:-.7px;right:728.3px;text-align:right;">3666</span>
<span style="top:533.5px;font-size:11.6px;line-height:12px;color:#d2d200;font-family:'Liberation Serif',serif;letter-spacing:-.7px;right:683.3px;text-align:right;">77</span>
<span style="top:533.5px;font-size:11.6px;line-height:12px;color:#e23c3c;font-family:'Liberation Serif',serif;letter-spacing:-.7px;right:638.3px;text-align:right;">3667</span>
<span style="top:533.5px;font-size:11.6px;line-height:12px;color:#d2d200;font-family:'Liberation Serif',serif;letter-spacing:-.7px;right:593.3px;text-align:right;">95</span>
<span style="top:533.5px;font-size:11.6px;line-height:12px;color:#d2d200;font-family:'Liberation Serif',serif;letter-spacing:-.7px;right:543.3px;text-align:right;">78649</span>
<span style="top:533.5px;font-size:11.6px;line-height:12px;color:#e23c3c;font-family:'Liberation Serif',serif;letter-spacing:-.7px;right:498.3px;text-align:right;">0<i>.</i>91<b>%</b></span>
<span style="top:533.5px;font-size:11.6px;line-height:12px;color:#e23c3c;font-family:'Liberation Serif',serif;letter-spacing:-.7px;right:453.3px;text-align:right;">33</span>
<span style="top:533.5px;font-size:11.6px;line-height:12px;color:#d2d200;font-family:'Liberation Serif',serif;letter-spacing:-.7px;right:408.3px;text-align:right;">1<i>.</i>32<b>%</b></span>
<span style="top:533.5px;font-size:11.6px;line-height:12px;color:#d2d200;font-family:'Liberation Serif',serif;letter-spacing:-.7px;right:358.3px;text-align:right;">101389</span>
<span style="top:533.5px;font-size:11.6px;line-height:12px;color:#d2d200;font-family:'Liberation Serif',serif;letter-spacing:-.7px;right:313.3px;text-align:right;">4868</span>
<span style="top:533.5px;font-size:11.6px;line-height:12px;color:#00a800;font-family:'Liberation Serif',serif;letter-spacing:-.7px;right:268.3px;text-align:right;">3632</span>
<span style="top:533.5px;font-size:11.6px;line-height:12px;color:#e23c3c;font-family:'Liberation Serif',serif;letter-spacing:-.7px;right:223.3px;text-align:right;">3674</span>
<span style="top:533.5px;font-size:11.6px;line-height:12px;color:#00a800;font-family:'Liberation Serif',serif;letter-spacing:-.7px;right:178.3px;text-align:right;">3626</span>
<span style="top:533.5px;font-size:11.6px;line-height:12px;color:#d6d6d6;font-family:'Liberation Serif',serif;letter-spacing:-.7px;right:133.3px;text-align:right;">3633</span>
<span style="top:533.5px;font-size:11.6px;line-height:12px;color:#d2d200;font-family:'Liberation Serif',serif;letter-spacing:-.7px;right:88.3px;text-align:right;">1<i>.</i>57</span>
<span style="top:533.5px;font-size:11.6px;line-height:12px;color:#d6d6d6;font-family:'Liberation Serif',serif;letter-spacing:-.7px;right:43.3px;text-align:right;">3630</span>
<span style="top:531.5px;font-size:8px;line-height:8px;color:#c81e1e;font-family:'Liberation Serif',serif;left:314.3px;transform:scaleX(.72);transform-origin:0 50%;">M</span>
<span style="top:553px;font-size:11.6px;line-height:12px;color:#d6d6d6;font-family:'Liberation Serif',serif;letter-spacing:-.7px;left:149.9px;width:100px;text-align:center;">25</span>
<span style="left:220px;top:553px;font-size:11.6px;line-height:12px;color:#d2d200;font-family:'Liberation Serif',serif;transform:scaleX(0.646);transform-origin:0 50%;">B</span>
<span style="left:225.1px;top:553px;font-size:11.6px;line-height:12px;color:#d2d200;font-family:'Liberation Serif',serif;">1</span>
<span style="left:230.2px;top:553px;font-size:11.6px;line-height:12px;color:#d2d200;font-family:'Liberation Serif',serif;">0</span>
<span style="top:554.1px;font-size:10.5px;line-height:13px;color:#d2d200;text-rendering:geometricPrecision;left:265px;width:44.36px;text-align-last:justify;">豆二2510</span>
<span style="top:553px;font-size:11.6px;line-height:12px;color:#e23c3c;font-family:'Liberation Serif',serif;letter-spacing:-.7px;right:818.3px;text-align:right;">3712</span>
<span style="top:553px;font-size:11.6px;line-height:12px;color:#d2d200;font-family:'Liberation Serif',serif;letter-spacing:-.7px;right:773.3px;text-align:right;">1</span>
<span style="top:553px;font-size:11.6px;line-height:12px;color:#e23c3c;font-family:'Liberation Serif',serif;letter-spacing:-.7px;right:728.3px;text-align:right;">3712</span>
<span style="top:553px;font-size:11.6px;line-height:12px;color:#d2d200;font-family:'Liberation Serif',serif;letter-spacing:-.7px;right:683.3px;text-align:right;">2</span>
<span style="top:553px;font-size:11.6px;line-height:12px;color:#e23c3c;font-family:'Liberation Serif',serif;letter-spacing:-.7px;right:638.3px;text-align:right;">3713</span>
<span style="top:553px;font-size:11.6px;line-height:12px;color:#d2d200;font-family:'Liberation Serif',serif;letter-spacing:-.7px;right:593.3px;text-align:right;">7</span>
<span style="top:553px;font-size:11.6px;line-height:12px;color:#d2d200;font-family:'Liberation Serif',serif;letter-spacing:-.7px;right:543.3px;text-align:right;">2392</span>
<span style="top:553px;font-size:11.6px;line-height:12px;color:#e23c3c;font-family:'Liberation Serif',serif;letter-spacing:-.7px;right:498.3px;text-align:right;">0<i>.</i>90<b>%</b></span>
<span style="top:553px;font-size:11.6px;line-height:12px;color:#e23c3c;font-family:'Liberation Serif',serif;letter-spacing:-.7px;right:453.3px;text-align:right;">33</span>
<span style="top:553px;font-size:11.6px;line-height:12px;color:#d2d200;font-family:'Liberation Serif',serif;letter-spacing:-.7px;right:408.3px;text-align:right;">1<i>.</i>49<b>%</b></span>
<span style="top:553px;font-size:11.6px;line-height:12px;color:#d2d200;font-family:'Liberation Serif',serif;letter-spacing:-.7px;right:358.3px;text-align:right;">36161</span>
<span style="top:553px;font-size:11.6px;line-height:12px;color:#d2d200;font-family:'Liberation Serif',serif;letter-spacing:-.7px;right:313.3px;text-align:right;">–366</span>
<span style="top:553px;font-size:11.6px;line-height:12px;color:#00a800;font-family:'Liberation Serif',serif;letter-spacing:-.7px;right:268.3px;text-align:right;">3666</span>
<span style="top:553px;font-size:11.6px;line-height:12px;color:#e23c3c;font-family:'Liberation Serif',serif;letter-spacing:-.7px;right:223.3px;text-align:right;">3721</span>
<span style="top:553px;font-size:11.6px;line-height:12px;color:#00a800;font-family:'Liberation Serif',serif;letter-spacing:-.7px;right:178.3px;text-align:right;">3666</span>
<span style="top:553px;font-size:11.6px;line-height:12px;color:#d6d6d6;font-family:'Liberation Serif',serif;letter-spacing:-.7px;right:133.3px;text-align:right;">3679</span>
<span style="top:553px;font-size:11.6px;line-height:12px;color:#d2d200;font-family:'Liberation Serif',serif;letter-spacing:-.7px;right:88.3px;text-align:right;">1<i>.</i>15</span>
<span style="top:553px;font-size:11.6px;line-height:12px;color:#d6d6d6;font-family:'Liberation Serif',serif;letter-spacing:-.7px;right:43.3px;text-align:right;">3674</span>
<span style="top:572.5px;font-size:11.6px;line-height:12px;color:#d6d6d6;font-family:'Liberation Serif',serif;letter-spacing:-.7px;left:149.9px;width:100px;text-align:center;">26</span>
<span style="left:220px;top:572.5px;font-size:11.6px;line-height:12px;color:#d2d200;font-family:'Liberation Serif',serif;transform:scaleX(0.646);transform-origin:0 50%;">B</span>
<span style="left:225.1px;top:572.5px;font-size:11.6px;line-height:12px;color:#d2d200;font-family:'Liberation Serif',serif;">1</span>
<span style="left:230.2px;top:572.5px;font-size:11.6px;line-height:12px;color:#d2d200;font-family:'Liberation Serif',serif;">1</span>
<span style="top:573.6px;font-size:10.5px;line-height:13px;color:#d2d200;text-rendering:geometricPrecision;left:265px;width:44.36px;text-align-last:justify;">豆二2511</span>
<span style="top:572.5px;font-size:11.6px;line-height:12px;color:#e23c3c;font-family:'Liberation Serif',serif;letter-spacing:-.7px;right:818.3px;text-align:right;">3720</span>
<span style="top:572.5px;font-size:11.6px;line-height:12px;color:#d2d200;font-family:'Liberation Serif',serif;letter-spacing:-.7px;right:773.3px;text-align:right;">1</span>
<span style="top:572.5px;font-size:11.6px;line-height:12px;color:#e23c3c;font-family:'Liberation Serif',serif;letter-spacing:-.7px;right:728.3px;text-align:right;">3719</span>
<span style="top:572.5px;font-size:11.6px;line-height:12px;color:#d2d200;font-family:'Liberation Serif',serif;letter-spacing:-.7px;right:683.3px;text-align:right;">3</span>
<span style="top:572.5px;font-size:11.6px;line-height:12px;color:#e23c3c;font-family:'Liberation Serif',serif;letter-spacing:-.7px;right:638.3px;text-align:right;">3720</span>
<span style="top:572.5px;font-size:11.6px;line-height:12px;color:#d2d200;font-family:'Liberation Serif',serif;letter-spacing:-.7px;right:593.3px;text-align:right;">18</span>
<span style="top:572.5px;font-size:11.6px;line-height:12px;color:#d2d200;font-family:'Liberation Serif',serif;letter-spacing:-.7px;right:543.3px;text-align:right;">8724</span>
<span style="top:572.5px;font-size:11.6px;line-height:12px;color:#e23c3c;font-family:'Liberation Serif',serif;letter-spacing:-.7px;right:498.3px;text-align:right;">0<i>.</i>95<b>%</b></span>
<span style="top:572.5px;font-size:11.6px;line-height:12px;color:#e23c3c;font-family:'Liberation Serif',serif;letter-spacing:-.7px;right:453.3px;text-align:right;">35</span>
<span style="top:572.5px;font-size:11.6px;line-height:12px;color:#d2d200;font-family:'Liberation Serif',serif;letter-spacing:-.7px;right:408.3px;text-align:right;">1<i>.</i>17<b>%</b></span>
<span style="top:572.5px;font-size:11.6px;line-height:12px;color:#d2d200;font-family:'Liberation Serif',serif;letter-spacing:-.7px;right:358.3px;text-align:right;">40289</span>
<span style="top:572.5px;font-size:11.6px;line-height:12px;color:#d2d200;font-family:'Liberation Serif',serif;letter-spacing:-.7px;right:313.3px;text-align:right;">1801</span>
<span style="top:572.5px;font-size:11.6px;line-height:12px;color:#e23c3c;font-family:'Liberation Serif',serif;letter-spacing:-.7px;right:268.3px;text-align:right;">3690</span>
<span style="top:572.5px;font-size:11.6px;line-height:12px;color:#e23c3c;font-family:'Liberation Serif',serif;letter-spacing:-.7px;right:223.3px;text-align:right;">3727</span>
<span style="top:572.5px;font-size:11.6px;line-height:12px;color:#00a800;font-family:'Liberation Serif',serif;letter-spacing:-.7px;right:178.3px;text-align:right;">3684</span>
<span style="top:572.5px;font-size:11.6px;line-height:12px;color:#d6d6d6;font-family:'Liberation Serif',serif;letter-spacing:-.7px;right:133.3px;text-align:right;">3685</span>
<span style="top:572.5px;font-size:11.6px;line-height:12px;color:#d2d200;font-family:'Liberation Serif',serif;letter-spacing:-.7px;right:88.3px;text-align:right;">1<i>.</i>73</span>
<span style="top:572.5px;font-size:11.6px;line-height:12px;color:#d6d6d6;font-family:'Liberation Serif',serif;letter-spacing:-.7px;right:43.3px;text-align:right;">3685</span>
<div style="left:183px;top:590px;width:982px;height:10px;background:#1b1d20;"></div>
<span style="top:594px;font-size:9px;line-height:12px;color:#c8c8c8;left:206px;width:18.00px;text-align-last:justify;">豆一</span>
<span style="top:594px;font-size:9px;line-height:12px;color:#c8c8c8;left:236px;width:18.00px;text-align-last:justify;">豆二</span>
<span style="top:594px;font-size:9px;line-height:12px;color:#c8c8c8;left:265px;width:27.00px;text-align-last:justify;">胶合板</span>
<span style="top:594px;font-size:9px;line-height:12px;color:#c8c8c8;left:303px;width:18.00px;text-align-last:justify;">纤板</span>
<span style="top:594px;font-size:9px;line-height:12px;color:#c8c8c8;left:332px;width:18.00px;text-align-last:justify;">玉米</span>
<span style="top:594px;font-size:9px;line-height:12px;color:#c8c8c8;left:362px;width:18.00px;text-align-last:justify;">淀粉</span>
<span style="top:594px;font-size:9px;line-height:12px;color:#c8c8c8;left:391px;width:27.00px;text-align-last:justify;">苯乙烯</span>
<span style="top:594px;font-size:9px;line-height:12px;color:#c8c8c8;left:430px;width:27.00px;text-align-last:justify;">乙二醇</span>
<span style="top:594px;font-size:9px;line-height:12px;color:#c8c8c8;left:468px;width:27.00px;text-align-last:justify;">纤维板</span>
<span style="top:594px;font-size:9px;line-height:12px;color:#c8c8c8;left:506px;width:18.00px;text-align-last:justify;">矿石</span>
<span style="top:594px;font-size:9px;line-height:12px;color:#c8c8c8;left:535px;width:18.00px;text-align-last:justify;">焦炭</span>
<span style="top:594px;font-size:9px;line-height:12px;color:#c8c8c8;left:565px;width:18.00px;text-align-last:justify;">鸡蛋</span>
<span style="top:594px;font-size:9px;line-height:12px;color:#c8c8c8;left:594px;width:18.00px;text-align-last:justify;">焦煤</span>
<span style="top:594px;font-size:9px;line-height:12px;color:#c8c8c8;left:624px;width:18.00px;text-align-last:justify;">塑料</span>
<span style="top:594px;font-size:9px;line-height:12px;color:#c8c8c8;left:653px;width:18.00px;text-align-last:justify;">原木</span>
<span style="top:594px;font-size:9px;line-height:12px;color:#c8c8c8;left:683px;width:18.00px;text-align-last:justify;">生猪</span>
<span style="top:594px;font-size:9px;line-height:12px;color:#c8c8c8;left:712px;width:18.00px;text-align-last:justify;">豆粕</span>
<span style="top:594px;font-size:9px;line-height:12px;color:#c8c8c8;left:741px;width:18.00px;text-align-last:justify;">棕榈</span>
<span style="top:594px;font-size:9px;line-height:12px;color:#c8c8c8;left:770px;width:27.00px;text-align-last:justify;">液化气</span>
<span style="top:594px;font-size:9px;line-height:12px;color:#c8c8c8;left:808px;width:27.00px;text-align-last:justify;">聚丙烯</span>
<span style="top:594px;font-size:9px;line-height:12px;color:#c8c8c8;left:846px;width:18.00px;text-align-last:justify;">粳米</span>
<span style="top:594px;font-size:9px;line-height:12px;color:#c8c8c8;left:876px;width:36.00px;text-align-last:justify;">聚氯乙烯</span>
<span style="top:594px;font-size:9px;line-height:12px;color:#c8c8c8;left:924px;width:18.00px;text-align-last:justify;">豆油</span>
<div style="left:1165px;top:60px;width:13px;height:540px;background:#000;"></div>
<div style="left:1166px;top:61px;width:11px;height:12px;background:#1a1a1a;"></div>
<div style="left:1168px;top:65px;width:0;height:0;border-left:3px solid transparent;border-right:3px solid transparent;border-bottom:4px solid #555"></div>
<div style="left:1166px;top:74px;width:11px;height:48px;background:#2a2a2a;border-radius:0 0 5px 5px"></div>
<div style="left:1168px;top:92px;width:6px;height:1px;background:#8a8a8a;"></div>
<div style="left:1168px;top:94.5px;width:6px;height:1px;background:#8a8a8a;"></div>
<div style="left:1168px;top:97px;width:6px;height:1px;background:#8a8a8a;"></div>
<div style="left:1168px;top:99.5px;width:6px;height:1px;background:#8a8a8a;"></div>
<div style="left:1178px;top:59px;width:22px;height:541px;background:#23262b;"></div>
<div style="left:1183px;top:61px;width:1px;height:1px;background:#777;"></div>
<div style="left:1186px;top:61px;width:1px;height:1px;background:#777;"></div>
<div style="left:1189px;top:61px;width:1px;height:1px;background:#777;"></div>
<div style="left:1192px;top:61px;width:1px;height:1px;background:#777;"></div>
<div style="left:1181px;top:346px;width:17px;height:17px;background:#45484c;border-radius:3px"></div>
<span style="top:84.8px;font-size:10px;line-height:12px;color:#d4d4d4;left:1089.8px;width:200px;text-align:center;">Bn</span>
<span style="top:117.8px;font-size:10px;line-height:12px;color:#d4d4d4;left:1089.8px;width:200px;text-align:center;">Sn</span>
<span style="top:134.3px;font-size:10px;line-height:12px;color:#d4d4d4;left:1089.8px;width:200px;text-align:center;">1</span>
<span style="top:150.8px;font-size:10px;line-height:12px;color:#d4d4d4;left:1089.8px;width:200px;text-align:center;">Mn</span>
<span style="top:167.3px;font-size:10px;line-height:12px;color:#d4d4d4;left:1089.8px;width:200px;text-align:center;">3</span>
<span style="top:183.8px;font-size:10px;line-height:12px;color:#d4d4d4;left:1089.8px;width:200px;text-align:center;">5</span>
<span style="top:200.3px;font-size:10px;line-height:12px;color:#d4d4d4;left:1089.8px;width:200px;text-align:center;">10</span>
<span style="top:216.8px;font-size:10px;line-height:12px;color:#d4d4d4;left:1089.8px;width:200px;text-align:center;">15</span>
<span style="top:233.3px;font-size:10px;line-height:12px;color:#d4d4d4;left:1089.8px;width:200px;text-align:center;">30</span>
<span style="top:249.8px;font-size:10px;line-height:12px;color:#d4d4d4;left:1089.8px;width:200px;text-align:center;">时</span>
<span style="top:266.3px;font-size:10px;line-height:12px;color:#d4d4d4;left:1089.8px;width:200px;text-align:center;">Hn</span>
<span style="top:282.8px;font-size:10px;line-height:12px;color:#d4d4d4;left:1089.8px;width:200px;text-align:center;">日</span>
<span style="top:299.3px;font-size:10px;line-height:12px;color:#d4d4d4;left:1089.8px;width:200px;text-align:center;">Rn</span>
<span style="top:315.8px;font-size:10px;line-height:12px;color:#d4d4d4;left:1089.8px;width:200px;text-align:center;">周</span>
<span style="top:332.3px;font-size:10px;line-height:12px;color:#d4d4d4;left:1089.8px;width:200px;text-align:center;">月</span>
<span style="top:348.8px;font-size:10px;line-height:12px;color:#d4d4d4;left:1089.8px;width:200px;text-align:center;">季</span>
<span style="top:365.3px;font-size:10px;line-height:12px;color:#d4d4d4;left:1089.8px;width:200px;text-align:center;">年</span>
<svg class="i" style="left:1183px;top:68px" width="13" height="12"><path d="M1 11h11M2 8l3-3 2 1.5 4-5"/></svg>
<svg class="i" style="left:1183px;top:101px" width="13" height="12"><rect x=".6" y=".6" width="11.8" height="10.8"/><path d="M2.5 8l2.5-3 2 1.5 3-4"/></svg>
<div style="left:1181px;top:381px;width:0;height:0;border-top:2.5px solid transparent;border-bottom:2.5px solid transparent;border-right:3px solid #ddd"></div>
<div style="left:345px;top:123px;width:510px;height:389px;background:#f0f0f0;border-radius:5px;overflow:hidden">
<div style="left:0;top:0;width:510px;height:22px;background:#f3f3f3"></div>
<div style="left:0;top:22px;width:510px;height:14px;background:#fff"></div>
</div>
<svg style="left:351px;top:128px" width="13" height="14" viewBox="0 0 13 14"><path d="M3.500 1h5l3.500 3.500V13H3.500z" fill="#fafafa" stroke="#888" stroke-width=".9"/><path d="M8.500 1v3.500H12" fill="none" stroke="#888" stroke-width=".9"/><rect x=".5" y=".5" width="5.500" height="5.500" fill="#e01818"/><path d="M1.500 4.500L4.500 1.500M1.500 1.500h3" stroke="#fff" stroke-width=".8"/><path d="M6 9h3.500M6 11h2" stroke="#444" stroke-width=".9"/></svg>
<span style="top:128px;font-size:9px;line-height:12px;color:#8a8a8a;left:368px;width:164.00px;text-align-last:justify;">交易系统编辑 - (所属公式组 : 2.指标交易)</span>
<div style="left:767px;top:134px;width:7px;height:1px;background:#a0a0a0;"></div>
<div style="left:800px;top:130px;width:8px;height:8px;border:1px solid #a0a0a0"></div>
<svg style="left:835px;top:130px" width="8" height="8"><path d="M.5.5l7 7M7.500.5l-7 7" stroke="#a0a0a0" stroke-width="1" fill="none"/></svg>
<span style="top:146.5px;font-size:9px;line-height:12px;color:#555;left:350px;width:29.49px;text-align-last:justify;">文件(F)</span>
<span style="top:146.5px;font-size:9px;line-height:12px;color:#555;left:389.5px;width:30.00px;text-align-last:justify;">编辑(E)</span>
<span style="top:146.5px;font-size:9px;line-height:12px;color:#555;left:429px;width:30.00px;text-align-last:justify;">查看(V)</span>
<span style="top:146.5px;font-size:9px;line-height:12px;color:#555;left:470px;width:26.49px;text-align-last:justify;">插入(I)</span>
<span style="top:146.5px;font-size:9px;line-height:12px;color:#555;left:507px;width:30.49px;text-align-last:justify;">调试(D)</span>
<span style="top:146.5px;font-size:9px;line-height:12px;color:#555;left:548px;width:30.00px;text-align-last:justify;">属性(P)</span>
<span style="top:146.5px;font-size:9px;line-height:12px;color:#555;left:588px;width:30.49px;text-align-last:justify;">帮助(H)</span>
<span style="top:167px;font-size:9px;line-height:12px;color:#111;left:358px;width:20.50px;text-align-last:justify;">名称:</span>
<div style="left:384px;top:166px;width:158px;height:14.5px;background:#fff;border-bottom:1px solid #8a8a8a;border-radius:2px"></div>
<span style="left:385.3px;top:167px;font-size:10.08px;line-height:12px;color:#111;font-family:'Liberation Mono',monospace;white-space:pre;transform:scale(0.7439,1);transform-origin:0 50%">BIAS</span>
<span style="left:403.3px;top:166.01px;font-size:9px;line-height:12px;color:#111;width:63px;text-align-last:justify;text-rendering:geometricPrecision">乖离率交易系统</span>
<span style="top:187.5px;font-size:9px;line-height:12px;color:#111;left:358px;width:20.50px;text-align-last:justify;">说明:</span>
<div style="left:384px;top:186px;width:158px;height:14.5px;background:#fff;border-bottom:1px solid #8a8a8a;border-radius:2px"></div>
<span style="top:185.5px;font-size:9px;line-height:12px;color:#f01818;left:548px;width:38.50px;text-align-last:justify;">调试信息:</span>
<div style="left:553px;top:166px;width:44.5px;height:14px;background:#fdfdfd;border:1px solid #d2d2d2;border-radius:2.5px"></div>
<span style="top:167px;font-size:9px;line-height:12px;color:#111;left:566.30px;width:18.00px;text-align-last:justify;">保存</span>
<div style="left:614px;top:166px;width:44.5px;height:14px;background:#fdfdfd;border:1px solid #d2d2d2;border-radius:2.5px"></div>
<span style="top:167px;font-size:9px;line-height:12px;color:#111;left:627.30px;width:18.00px;text-align-last:justify;">回测</span>
<div style="left:675px;top:166px;width:44.5px;height:14px;background:#fdfdfd;border:1px solid #d2d2d2;border-radius:2.5px"></div>
<span style="top:167px;font-size:9px;line-height:12px;color:#111;left:688.30px;width:18.00px;text-align-last:justify;">运行</span>
<div style="left:735.5px;top:166px;width:44.5px;height:14px;background:#fdfdfd;border:1px solid #d2d2d2;border-radius:2.5px"></div>
<span style="top:167px;font-size:9px;line-height:12px;color:#111;left:748.80px;width:18.00px;text-align-last:justify;">编译</span>
<div style="left:796px;top:166px;width:44.5px;height:14px;background:#fdfdfd;border:1px solid #d2d2d2;border-radius:2.5px"></div>
<span style="top:167px;font-size:9px;line-height:12px;color:#111;left:809.30px;width:18.00px;text-align-last:justify;">确定</span>
<div style="left:358px;top:206px;width:9px;height:9px;border:1px solid #bdbdbd;border-radius:50%;background:#f6f6f6"></div>
<span style="top:204.5px;font-size:9px;line-height:12px;color:#8c8c8c;left:370px;width:18.00px;text-align-last:justify;">副图</span>
<div style="left:396px;top:206px;width:9px;height:9px;border:3px solid #c4c4c4;border-radius:50%;background:#fff"></div>
<span style="top:204.5px;font-size:9px;line-height:12px;color:#8c8c8c;left:408px;width:36.00px;text-align-last:justify;">主图叠加</span>
<div style="left:452px;top:206px;width:9.500px;height:9.500px;border:1px solid #5a5a5a;border-radius:2px;background:#f8f8f8"></div>
<span style="top:204.5px;font-size:9px;line-height:12px;color:#111;left:464px;width:18.00px;text-align-last:justify;">加密</span>
<div style="left:358px;top:220.5px;width:483px;height:273.5px;background:#f0f0f0;border:1px solid #c6c6c6"></div>
<div style="left:370px;top:221.5px;width:458.5px;height:260px;background:#fff;"></div>
<div style="left:828.5px;top:482px;width:11.5px;height:11px;background:#fcfcfc;"></div>
<div style="left:834px;top:234px;width:1.5px;height:110px;background:#8c8c8c;"></div>
<div style="left:372px;top:487.5px;width:12.5px;height:1.5px;background:#7c7c7c;"></div>
<div style="left:347px;top:307px;width:8px;height:54px;background:#fcfcfc;border:1px solid #dcdcdc;border-radius:3px"></div>
<svg style="left:348.500px;top:331px" width="5" height="7"><path d="M4 .700L1 3.500 4 6.300" stroke="#444" stroke-width="1" fill="none"/></svg>
<div style="left:844.5px;top:307px;width:8px;height:54px;background:#fcfcfc;border:1px solid #dcdcdc;border-radius:3px"></div>
<svg style="left:846px;top:330.500px" width="5" height="7"><path d="M4 .700L1 3.500 4 6.300" stroke="#444" stroke-width="1" fill="none"/></svg>
<span style="left:377.25px;top:221.7px;font-size:11.76px;line-height:12px;color:#cbcbcb;font-family:'Liberation Mono',monospace;white-space:pre;transform:scale(0.7439,1);transform-origin:0 50%">1</span>
<span style="left:402.2px;top:221.7px;font-size:11.76px;line-height:12px;color:#1f9e48;font-family:'Liberation Mono',monospace;white-space:pre;transform:scale(0.7439,1);transform-origin:0 50%">//</span>
<span style="left:412.7px;top:220.54px;font-size:10.5px;line-height:12px;color:#1f9e48;width:346.5px;text-align-last:justify;text-rendering:geometricPrecision">该模型为简单示范模型，用户需根据自己交易经验，修改完善后再实际应用</span>
<span style="left:759.2px;top:221.7px;font-size:11.76px;line-height:12px;color:#1f9e48;font-family:'Liberation Mono',monospace;white-space:pre;transform:scale(0.7439,1);transform-origin:0 50%">!!!</span>
<span style="left:377.25px;top:232.95px;font-size:11.76px;line-height:12px;color:#cbcbcb;font-family:'Liberation Mono',monospace;white-space:pre;transform:scale(0.7439,1);transform-origin:0 50%">2</span>
<span style="left:377.25px;top:244.2px;font-size:11.76px;line-height:12px;color:#cbcbcb;font-family:'Liberation Mono',monospace;white-space:pre;transform:scale(0.7439,1);transform-origin:0 50%">3</span>
<span style="left:402.2px;top:244.2px;font-size:11.76px;line-height:12px;color:#1f9e48;font-family:'Liberation Mono',monospace;white-space:pre;transform:scale(0.7439,1);transform-origin:0 50%">//</span>
<span style="left:412.7px;top:243.04px;font-size:10.5px;line-height:12px;color:#1f9e48;width:42px;text-align-last:justify;text-rendering:geometricPrecision">适用模式</span>
<span style="left:454.7px;top:244.2px;font-size:11.76px;line-height:12px;color:#1f9e48;font-family:'Liberation Mono',monospace;white-space:pre;transform:scale(0.7439,1);transform-origin:0 50%">: “</span>
<span style="left:470.45px;top:243.04px;font-size:10.5px;line-height:12px;color:#1f9e48;width:42px;text-align-last:justify;text-rendering:geometricPrecision">走完一根</span>
<span style="left:512.45px;top:244.2px;font-size:11.76px;line-height:12px;color:#1f9e48;font-family:'Liberation Mono',monospace;white-space:pre;transform:scale(0.7439,1);transform-origin:0 50%">K</span>
<span style="left:517.7px;top:243.04px;font-size:10.5px;line-height:12px;color:#1f9e48;width:31.5px;text-align-last:justify;text-rendering:geometricPrecision">线以后</span>
<span style="left:549.2px;top:244.2px;font-size:11.76px;line-height:12px;color:#1f9e48;font-family:'Liberation Mono',monospace;white-space:pre;transform:scale(0.7439,1);transform-origin:0 50%">” </span>
<span style="left:377.25px;top:255.45px;font-size:11.76px;line-height:12px;color:#cbcbcb;font-family:'Liberation Mono',monospace;white-space:pre;transform:scale(0.7439,1);transform-origin:0 50%">4</span>
<span style="left:402.2px;top:255.45px;font-size:11.76px;line-height:12px;color:#1f9e48;font-family:'Liberation Mono',monospace;white-space:pre;transform:scale(0.7439,1);transform-origin:0 50%">//</span>
<span style="left:412.7px;top:254.29px;font-size:10.5px;line-height:12px;color:#1f9e48;width:73.5px;text-align-last:justify;text-rendering:geometricPrecision">若用户模式选为</span>
<span style="left:486.2px;top:255.45px;font-size:11.76px;line-height:12px;color:#1f9e48;font-family:'Liberation Mono',monospace;white-space:pre;transform:scale(0.7439,1);transform-origin:0 50%"> “</span>
<span style="left:496.7px;top:254.29px;font-size:10.5px;line-height:12px;color:#1f9e48;width:63px;text-align-last:justify;text-rendering:geometricPrecision">固定时间间隔</span>
<span style="left:559.7px;top:255.45px;font-size:11.76px;line-height:12px;color:#1f9e48;font-family:'Liberation Mono',monospace;white-space:pre;transform:scale(0.7439,1);transform-origin:0 50%">” </span>
<span style="left:570.2px;top:254.29px;font-size:10.5px;line-height:12px;color:#1f9e48;width:31.5px;text-align-last:justify;text-rendering:geometricPrecision">，请将</span>
<span style="left:601.7px;top:255.45px;font-size:11.76px;line-height:12px;color:#1f9e48;font-family:'Liberation Mono',monospace;white-space:pre;transform:scale(0.7439,1);transform-origin:0 50%">"</span>
<span style="left:606.95px;top:254.29px;font-size:10.5px;line-height:12px;color:#1f9e48;width:42px;text-align-last:justify;text-rendering:geometricPrecision">交易条件</span>
<span style="left:648.95px;top:255.45px;font-size:11.76px;line-height:12px;color:#1f9e48;font-family:'Liberation Mono',monospace;white-space:pre;transform:scale(0.7439,1);transform-origin:0 50%">"</span>
<span style="left:654.2px;top:254.29px;font-size:10.5px;line-height:12px;color:#1f9e48;width:21px;text-align-last:justify;text-rendering:geometricPrecision">中的</span>
<span style="left:675.2px;top:255.45px;font-size:11.76px;line-height:12px;color:#1f9e48;font-family:'Liberation Mono',monospace;white-space:pre;transform:scale(0.7439,1);transform-origin:0 50%">CLOSE</span>
<span style="left:701.45px;top:254.29px;font-size:10.5px;line-height:12px;color:#1f9e48;width:21px;text-align-last:justify;text-rendering:geometricPrecision">改为</span>
<span style="left:722.45px;top:255.45px;font-size:11.76px;line-height:12px;color:#1f9e48;font-family:'Liberation Mono',monospace;white-space:pre;transform:scale(0.7439,1);transform-origin:0 50%">OPEN,</span>
<span style="left:748.7px;top:254.29px;font-size:10.5px;line-height:12px;color:#1f9e48;width:73.5px;text-align-last:justify;text-rendering:geometricPrecision">避免信号闪烁。</span>
<span style="left:377.25px;top:266.7px;font-size:11.76px;line-height:12px;color:#cbcbcb;font-family:'Liberation Mono',monospace;white-space:pre;transform:scale(0.7439,1);transform-origin:0 50%">5</span>
<span style="left:402.2px;top:266.7px;font-size:11.76px;line-height:12px;color:#1f9e48;font-family:'Liberation Mono',monospace;white-space:pre;transform:scale(0.7439,1);transform-origin:0 50%">//</span>
<span style="left:377.25px;top:277.95px;font-size:11.76px;line-height:12px;color:#cbcbcb;font-family:'Liberation Mono',monospace;white-space:pre;transform:scale(0.7439,1);transform-origin:0 50%">6</span>
<span style="left:402.2px;top:277.95px;font-size:11.76px;line-height:12px;color:#1f9e48;font-family:'Liberation Mono',monospace;white-space:pre;transform:scale(0.7439,1);transform-origin:0 50%">//</span>
<span style="left:412.7px;top:276.80px;font-size:10.5px;line-height:12px;color:#1f9e48;width:42px;text-align-last:justify;text-rendering:geometricPrecision">中间变量</span>
<span style="left:377.25px;top:289.2px;font-size:11.76px;line-height:12px;color:#cbcbcb;font-family:'Liberation Mono',monospace;white-space:pre;transform:scale(0.7439,1);transform-origin:0 50%">7</span>
<span style="left:377.25px;top:300.45px;font-size:11.76px;line-height:12px;color:#cbcbcb;font-family:'Liberation Mono',monospace;white-space:pre;transform:scale(0.7439,1);transform-origin:0 50%">8</span>
<span style="left:402.2px;top:300.45px;font-size:11.76px;line-height:12px;color:#262626;font-family:'Liberation Mono',monospace;white-space:pre;transform:scale(0.7439,1);transform-origin:0 50%">BIAS :=(</span>
<span style="left:444.2px;top:300.45px;font-size:11.76px;line-height:12px;color:#e018e0;font-family:'Liberation Mono',monospace;white-space:pre;transform:scale(0.7439,1);transform-origin:0 50%">CLOSE</span>
<span style="left:470.45px;top:300.45px;font-size:11.76px;line-height:12px;color:#262626;font-family:'Liberation Mono',monospace;white-space:pre;transform:scale(0.7439,1);transform-origin:0 50%">-</span>
<span style="left:475.7px;top:300.45px;font-size:11.76px;line-height:12px;color:#2a78e4;font-family:'Liberation Mono',monospace;white-space:pre;transform:scale(0.7439,1);transform-origin:0 50%">MA</span>
<span style="left:486.2px;top:300.45px;font-size:11.76px;line-height:12px;color:#262626;font-family:'Liberation Mono',monospace;white-space:pre;transform:scale(0.7439,1);transform-origin:0 50%">(</span>
<span style="left:491.45px;top:300.45px;font-size:11.76px;line-height:12px;color:#e018e0;font-family:'Liberation Mono',monospace;white-space:pre;transform:scale(0.7439,1);transform-origin:0 50%">CLOSE</span>
<span style="left:517.7px;top:300.45px;font-size:11.76px;line-height:12px;color:#262626;font-family:'Liberation Mono',monospace;white-space:pre;transform:scale(0.7439,1);transform-origin:0 50%">,M))/</span>
<span style="left:543.95px;top:300.45px;font-size:11.76px;line-height:12px;color:#2a78e4;font-family:'Liberation Mono',monospace;white-space:pre;transform:scale(0.7439,1);transform-origin:0 50%">MA</span>
<span style="left:554.45px;top:300.45px;font-size:11.76px;line-height:12px;color:#262626;font-family:'Liberation Mono',monospace;white-space:pre;transform:scale(0.7439,1);transform-origin:0 50%">(</span>
<span style="left:559.7px;top:300.45px;font-size:11.76px;line-height:12px;color:#e018e0;font-family:'Liberation Mono',monospace;white-space:pre;transform:scale(0.7439,1);transform-origin:0 50%">CLOSE</span>
<span style="left:585.95px;top:300.45px;font-size:11.76px;line-height:12px;color:#262626;font-family:'Liberation Mono',monospace;white-space:pre;transform:scale(0.7439,1);transform-origin:0 50%">,M)*100;</span>
<span style="left:377.25px;top:311.7px;font-size:11.76px;line-height:12px;color:#cbcbcb;font-family:'Liberation Mono',monospace;white-space:pre;transform:scale(0.7439,1);transform-origin:0 50%">9</span>
<span style="left:402.2px;top:310.55px;font-size:10.5px;line-height:12px;color:#262626;width:21px;text-align-last:justify;text-rendering:geometricPrecision">手数</span>
<span style="left:423.2px;top:311.7px;font-size:11.76px;line-height:12px;color:#262626;font-family:'Liberation Mono',monospace;white-space:pre;transform:scale(0.7439,1);transform-origin:0 50%">:=</span>
<span style="left:433.7px;top:310.55px;font-size:10.5px;line-height:12px;color:#262626;width:52.5px;text-align-last:justify;text-rendering:geometricPrecision">手数或股数</span>
<span style="left:486.2px;top:311.7px;font-size:11.76px;line-height:12px;color:#262626;font-family:'Liberation Mono',monospace;white-space:pre;transform:scale(0.7439,1);transform-origin:0 50%">;</span>
<span style="left:372px;top:322.95px;font-size:11.76px;line-height:12px;color:#cbcbcb;font-family:'Liberation Mono',monospace;white-space:pre;transform:scale(0.7439,1);transform-origin:0 50%">10</span>
<span style="left:402.2px;top:322.95px;font-size:11.76px;line-height:12px;color:#1f9e48;font-family:'Liberation Mono',monospace;white-space:pre;transform:scale(0.7439,1);transform-origin:0 50%">//</span>
<span style="left:412.7px;top:321.80px;font-size:10.5px;line-height:12px;color:#1f9e48;width:42px;text-align-last:justify;text-rendering:geometricPrecision">交易条件</span>
<span style="left:372px;top:334.2px;font-size:11.76px;line-height:12px;color:#cbcbcb;font-family:'Liberation Mono',monospace;white-space:pre;transform:scale(0.7439,1);transform-origin:0 50%">11</span>
<span style="left:372px;top:345.45px;font-size:11.76px;line-height:12px;color:#cbcbcb;font-family:'Liberation Mono',monospace;white-space:pre;transform:scale(0.7439,1);transform-origin:0 50%">12</span>
<span style="left:402.2px;top:344.30px;font-size:10.5px;line-height:12px;color:#262626;width:63px;text-align-last:justify;text-rendering:geometricPrecision">开多平空条件</span>
<span style="left:465.2px;top:345.45px;font-size:11.76px;line-height:12px;color:#262626;font-family:'Liberation Mono',monospace;white-space:pre;transform:scale(0.7439,1);transform-origin:0 50%">:=</span>
<span style="left:475.7px;top:345.45px;font-size:11.76px;line-height:12px;color:#2a78e4;font-family:'Liberation Mono',monospace;white-space:pre;transform:scale(0.7439,1);transform-origin:0 50%">CROSS</span>
<span style="left:501.95px;top:345.45px;font-size:11.76px;line-height:12px;color:#262626;font-family:'Liberation Mono',monospace;white-space:pre;transform:scale(0.7439,1);transform-origin:0 50%">(LL,BIAS*100);</span>
<span style="left:575.45px;top:345.45px;font-size:11.76px;line-height:12px;color:#1f9e48;font-family:'Liberation Mono',monospace;white-space:pre;transform:scale(0.7439,1);transform-origin:0 50%">//</span>
<span style="left:585.95px;top:344.30px;font-size:10.5px;line-height:12px;color:#1f9e48;width:63px;text-align-last:justify;text-rendering:geometricPrecision">开多平空条件</span>
<span style="left:372px;top:356.7px;font-size:11.76px;line-height:12px;color:#cbcbcb;font-family:'Liberation Mono',monospace;white-space:pre;transform:scale(0.7439,1);transform-origin:0 50%">13</span>
<span style="left:402.2px;top:355.55px;font-size:10.5px;line-height:12px;color:#262626;width:63px;text-align-last:justify;text-rendering:geometricPrecision">开空平多条件</span>
<span style="left:465.2px;top:356.7px;font-size:11.76px;line-height:12px;color:#262626;font-family:'Liberation Mono',monospace;white-space:pre;transform:scale(0.7439,1);transform-origin:0 50%">:=</span>
<span style="left:475.7px;top:356.7px;font-size:11.76px;line-height:12px;color:#2a78e4;font-family:'Liberation Mono',monospace;white-space:pre;transform:scale(0.7439,1);transform-origin:0 50%">CROSS</span>
<span style="left:501.95px;top:356.7px;font-size:11.76px;line-height:12px;color:#262626;font-family:'Liberation Mono',monospace;white-space:pre;transform:scale(0.7439,1);transform-origin:0 50%">(BIAS*100,LH);</span>
<span style="left:575.45px;top:356.7px;font-size:11.76px;line-height:12px;color:#1f9e48;font-family:'Liberation Mono',monospace;white-space:pre;transform:scale(0.7439,1);transform-origin:0 50%">//</span>
<span style="left:585.95px;top:355.55px;font-size:10.5px;line-height:12px;color:#1f9e48;width:63px;text-align-last:justify;text-rendering:geometricPrecision">开空平多条件</span>
<span style="left:372px;top:367.95px;font-size:11.76px;line-height:12px;color:#cbcbcb;font-family:'Liberation Mono',monospace;white-space:pre;transform:scale(0.7439,1);transform-origin:0 50%">14</span>
<span style="left:372px;top:379.2px;font-size:11.76px;line-height:12px;color:#cbcbcb;font-family:'Liberation Mono',monospace;white-space:pre;transform:scale(0.7439,1);transform-origin:0 50%">15</span>
<span style="left:402.2px;top:379.2px;font-size:11.76px;line-height:12px;color:#1f9e48;font-family:'Liberation Mono',monospace;white-space:pre;transform:scale(0.7439,1);transform-origin:0 50%">//</span>
<span style="left:412.7px;top:378.05px;font-size:10.5px;line-height:12px;color:#1f9e48;width:42px;text-align-last:justify;text-rendering:geometricPrecision">交易系统</span>
<span style="left:372px;top:390.45px;font-size:11.76px;line-height:12px;color:#cbcbcb;font-family:'Liberation Mono',monospace;white-space:pre;transform:scale(0.7439,1);transform-origin:0 50%">16</span>
<span style="left:402.2px;top:389.30px;font-size:10.5px;line-height:12px;color:#262626;width:21px;text-align-last:justify;text-rendering:geometricPrecision">平空</span>
<span style="left:423.2px;top:390.45px;font-size:11.76px;line-height:12px;color:#262626;font-family:'Liberation Mono',monospace;white-space:pre;transform:scale(0.7439,1);transform-origin:0 50%">:</span>
<span style="left:428.45px;top:390.45px;font-size:11.76px;line-height:12px;color:#ea2020;font-family:'Liberation Mono',monospace;white-space:pre;transform:scale(0.7439,1);transform-origin:0 50%">SELLSHORT</span>
<span style="left:475.7px;top:390.45px;font-size:11.76px;line-height:12px;color:#262626;font-family:'Liberation Mono',monospace;white-space:pre;transform:scale(0.7439,1);transform-origin:0 50%">(</span>
<span style="left:480.95px;top:389.30px;font-size:10.5px;line-height:12px;color:#262626;width:63px;text-align-last:justify;text-rendering:geometricPrecision">开多平空条件</span>
<span style="left:543.95px;top:390.45px;font-size:11.76px;line-height:12px;color:#262626;font-family:'Liberation Mono',monospace;white-space:pre;transform:scale(0.7439,1);transform-origin:0 50%">,</span>
<span style="left:549.2px;top:389.30px;font-size:10.5px;line-height:12px;color:#262626;width:21px;text-align-last:justify;text-rendering:geometricPrecision">手数</span>
<span style="left:570.2px;top:390.45px;font-size:11.76px;line-height:12px;color:#262626;font-family:'Liberation Mono',monospace;white-space:pre;transform:scale(0.7439,1);transform-origin:0 50%">,</span>
<span style="left:575.45px;top:390.45px;font-size:11.76px;line-height:12px;color:#e018e0;font-family:'Liberation Mono',monospace;white-space:pre;transform:scale(0.7439,1);transform-origin:0 50%">MARKET</span>
<span style="left:606.95px;top:390.45px;font-size:11.76px;line-height:12px;color:#262626;font-family:'Liberation Mono',monospace;white-space:pre;transform:scale(0.7439,1);transform-origin:0 50%">);</span>
<span style="left:372px;top:401.7px;font-size:11.76px;line-height:12px;color:#cbcbcb;font-family:'Liberation Mono',monospace;white-space:pre;transform:scale(0.7439,1);transform-origin:0 50%">17</span>
<span style="left:402.2px;top:400.55px;font-size:10.5px;line-height:12px;color:#262626;width:21px;text-align-last:justify;text-rendering:geometricPrecision">平多</span>
<span style="left:423.2px;top:401.7px;font-size:11.76px;line-height:12px;color:#262626;font-family:'Liberation Mono',monospace;white-space:pre;transform:scale(0.7439,1);transform-origin:0 50%">:</span>
<span style="left:428.45px;top:401.7px;font-size:11.76px;line-height:12px;color:#ea2020;font-family:'Liberation Mono',monospace;white-space:pre;transform:scale(0.7439,1);transform-origin:0 50%">SELL</span>
<span style="left:449.45px;top:401.7px;font-size:11.76px;line-height:12px;color:#262626;font-family:'Liberation Mono',monospace;white-space:pre;transform:scale(0.7439,1);transform-origin:0 50%">(</span>
<span style="left:454.7px;top:400.55px;font-size:10.5px;line-height:12px;color:#262626;width:63px;text-align-last:justify;text-rendering:geometricPrecision">开空平多条件</span>
<span style="left:517.7px;top:401.7px;font-size:11.76px;line-height:12px;color:#262626;font-family:'Liberation Mono',monospace;white-space:pre;transform:scale(0.7439,1);transform-origin:0 50%">,</span>
<span style="left:522.95px;top:400.55px;font-size:10.5px;line-height:12px;color:#262626;width:21px;text-align-last:justify;text-rendering:geometricPrecision">手数</span>
<span style="left:543.95px;top:401.7px;font-size:11.76px;line-height:12px;color:#262626;font-family:'Liberation Mono',monospace;white-space:pre;transform:scale(0.7439,1);transform-origin:0 50%">,</span>
<span style="left:549.2px;top:401.7px;font-size:11.76px;line-height:12px;color:#e018e0;font-family:'Liberation Mono',monospace;white-space:pre;transform:scale(0.7439,1);transform-origin:0 50%">MARKET</span>
<span style="left:580.7px;top:401.7px;font-size:11.76px;line-height:12px;color:#262626;font-family:'Liberation Mono',monospace;white-space:pre;transform:scale(0.7439,1);transform-origin:0 50%">);</span>
<span style="left:372px;top:412.95px;font-size:11.76px;line-height:12px;color:#cbcbcb;font-family:'Liberation Mono',monospace;white-space:pre;transform:scale(0.7439,1);transform-origin:0 50%">18</span>
<span style="left:402.2px;top:411.80px;font-size:10.5px;line-height:12px;color:#262626;width:21px;text-align-last:justify;text-rendering:geometricPrecision">开多</span>
<span style="left:423.2px;top:412.95px;font-size:11.76px;line-height:12px;color:#262626;font-family:'Liberation Mono',monospace;white-space:pre;transform:scale(0.7439,1);transform-origin:0 50%">:</span>
<span style="left:428.45px;top:412.95px;font-size:11.76px;line-height:12px;color:#ea2020;font-family:'Liberation Mono',monospace;white-space:pre;transform:scale(0.7439,1);transform-origin:0 50%">BUY</span>
<span style="left:444.2px;top:412.95px;font-size:11.76px;line-height:12px;color:#262626;font-family:'Liberation Mono',monospace;white-space:pre;transform:scale(0.7439,1);transform-origin:0 50%">(</span>
<span style="left:449.45px;top:411.80px;font-size:10.5px;line-height:12px;color:#262626;width:63px;text-align-last:justify;text-rendering:geometricPrecision">开多平空条件</span>
<span style="left:512.45px;top:412.95px;font-size:11.76px;line-height:12px;color:#262626;font-family:'Liberation Mono',monospace;white-space:pre;transform:scale(0.7439,1);transform-origin:0 50%">,</span>
<span style="left:517.7px;top:411.80px;font-size:10.5px;line-height:12px;color:#262626;width:21px;text-align-last:justify;text-rendering:geometricPrecision">手数</span>
<span style="left:538.7px;top:412.95px;font-size:11.76px;line-height:12px;color:#262626;font-family:'Liberation Mono',monospace;white-space:pre;transform:scale(0.7439,1);transform-origin:0 50%">,</span>
<span style="left:543.95px;top:412.95px;font-size:11.76px;line-height:12px;color:#e018e0;font-family:'Liberation Mono',monospace;white-space:pre;transform:scale(0.7439,1);transform-origin:0 50%">MARKET</span>
<span style="left:575.45px;top:412.95px;font-size:11.76px;line-height:12px;color:#262626;font-family:'Liberation Mono',monospace;white-space:pre;transform:scale(0.7439,1);transform-origin:0 50%">);</span>
<span style="left:372px;top:424.2px;font-size:11.76px;line-height:12px;color:#cbcbcb;font-family:'Liberation Mono',monospace;white-space:pre;transform:scale(0.7439,1);transform-origin:0 50%">19</span>
<span style="left:402.2px;top:423.05px;font-size:10.5px;line-height:12px;color:#262626;width:21px;text-align-last:justify;text-rendering:geometricPrecision">开空</span>
<span style="left:423.2px;top:424.2px;font-size:11.76px;line-height:12px;color:#262626;font-family:'Liberation Mono',monospace;white-space:pre;transform:scale(0.7439,1);transform-origin:0 50%">:</span>
<span style="left:428.45px;top:424.2px;font-size:11.76px;line-height:12px;color:#ea2020;font-family:'Liberation Mono',monospace;white-space:pre;transform:scale(0.7439,1);transform-origin:0 50%">BUYSHORT</span>
<span style="left:470.45px;top:424.2px;font-size:11.76px;line-height:12px;color:#262626;font-family:'Liberation Mono',monospace;white-space:pre;transform:scale(0.7439,1);transform-origin:0 50%">(</span>
<span style="left:475.7px;top:423.05px;font-size:10.5px;line-height:12px;color:#262626;width:63px;text-align-last:justify;text-rendering:geometricPrecision">开空平多条件</span>
<span style="left:538.7px;top:424.2px;font-size:11.76px;line-height:12px;color:#262626;font-family:'Liberation Mono',monospace;white-space:pre;transform:scale(0.7439,1);transform-origin:0 50%">,</span>
<span style="left:543.95px;top:423.05px;font-size:10.5px;line-height:12px;color:#262626;width:21px;text-align-last:justify;text-rendering:geometricPrecision">手数</span>
<span style="left:564.95px;top:424.2px;font-size:11.76px;line-height:12px;color:#262626;font-family:'Liberation Mono',monospace;white-space:pre;transform:scale(0.7439,1);transform-origin:0 50%">,</span>
<span style="left:570.2px;top:424.2px;font-size:11.76px;line-height:12px;color:#e018e0;font-family:'Liberation Mono',monospace;white-space:pre;transform:scale(0.7439,1);transform-origin:0 50%">MARKET</span>
<span style="left:601.7px;top:424.2px;font-size:11.76px;line-height:12px;color:#262626;font-family:'Liberation Mono',monospace;white-space:pre;transform:scale(0.7439,1);transform-origin:0 50%">);</span>
<span style="left:372px;top:435.45px;font-size:11.76px;line-height:12px;color:#cbcbcb;font-family:'Liberation Mono',monospace;white-space:pre;transform:scale(0.7439,1);transform-origin:0 50%">20</span>
<span style="left:372px;top:446.7px;font-size:11.76px;line-height:12px;color:#cbcbcb;font-family:'Liberation Mono',monospace;white-space:pre;transform:scale(0.7439,1);transform-origin:0 50%">21</span>
<span style="left:402.2px;top:445.55px;font-size:10.5px;line-height:12px;color:#262626;width:42px;text-align-last:justify;text-rendering:geometricPrecision">当前持仓</span>
<span style="left:444.2px;top:446.7px;font-size:11.76px;line-height:12px;color:#262626;font-family:'Liberation Mono',monospace;white-space:pre;transform:scale(0.7439,1);transform-origin:0 50%">:</span>
<span style="left:449.45px;top:446.7px;font-size:11.76px;line-height:12px;color:#2a78e4;font-family:'Liberation Mono',monospace;white-space:pre;transform:scale(0.7439,1);transform-origin:0 50%">HOLDING</span>
<span style="left:486.2px;top:446.7px;font-size:11.76px;line-height:12px;color:#262626;font-family:'Liberation Mono',monospace;white-space:pre;transform:scale(0.7439,1);transform-origin:0 50%">,</span>
<span style="left:491.45px;top:446.7px;font-size:11.76px;line-height:12px;color:#2a78e4;font-family:'Liberation Mono',monospace;white-space:pre;transform:scale(0.7439,1);transform-origin:0 50%">COLORGRAY</span>
<span style="left:538.7px;top:446.7px;font-size:11.76px;line-height:12px;color:#262626;font-family:'Liberation Mono',monospace;white-space:pre;transform:scale(0.7439,1);transform-origin:0 50%">,</span>
<span style="left:543.95px;top:446.7px;font-size:11.76px;line-height:12px;color:#2a78e4;font-family:'Liberation Mono',monospace;white-space:pre;transform:scale(0.7439,1);transform-origin:0 50%">LINETHICK0</span>
<span style="left:596.45px;top:446.7px;font-size:11.76px;line-height:12px;color:#262626;font-family:'Liberation Mono',monospace;white-space:pre;transform:scale(0.7439,1);transform-origin:0 50%">;</span>
<span style="left:372px;top:457.95px;font-size:11.76px;line-height:12px;color:#cbcbcb;font-family:'Liberation Mono',monospace;white-space:pre;transform:scale(0.7439,1);transform-origin:0 50%">22</span>
<span style="left:402.2px;top:456.80px;font-size:10.5px;line-height:12px;color:#262626;width:42px;text-align-last:justify;text-rendering:geometricPrecision">当前资产</span>
<span style="left:444.2px;top:457.95px;font-size:11.76px;line-height:12px;color:#262626;font-family:'Liberation Mono',monospace;white-space:pre;transform:scale(0.7439,1);transform-origin:0 50%">:</span>
<span style="left:449.45px;top:457.95px;font-size:11.76px;line-height:12px;color:#2a78e4;font-family:'Liberation Mono',monospace;white-space:pre;transform:scale(0.7439,1);transform-origin:0 50%">ASSET</span>
<span style="left:475.7px;top:457.95px;font-size:11.76px;line-height:12px;color:#262626;font-family:'Liberation Mono',monospace;white-space:pre;transform:scale(0.7439,1);transform-origin:0 50%">,</span>
<span style="left:480.95px;top:457.95px;font-size:11.76px;line-height:12px;color:#2a78e4;font-family:'Liberation Mono',monospace;white-space:pre;transform:scale(0.7439,1);transform-origin:0 50%">NOAXIS</span>
<span style="left:512.45px;top:457.95px;font-size:11.76px;line-height:12px;color:#262626;font-family:'Liberation Mono',monospace;white-space:pre;transform:scale(0.7439,1);transform-origin:0 50%">,</span>
<span style="left:517.7px;top:457.95px;font-size:11.76px;line-height:12px;color:#2a78e4;font-family:'Liberation Mono',monospace;white-space:pre;transform:scale(0.7439,1);transform-origin:0 50%">COLORGRAY</span>
<span style="left:564.95px;top:457.95px;font-size:11.76px;line-height:12px;color:#262626;font-family:'Liberation Mono',monospace;white-space:pre;transform:scale(0.7439,1);transform-origin:0 50%">;</span>
<span style="left:372px;top:469.2px;font-size:11.76px;line-height:12px;color:#cbcbcb;font-family:'Liberation Mono',monospace;white-space:pre;transform:scale(0.7439,1);transform-origin:0 50%">23</span>
<span style="left:402.2px;top:469.2px;font-size:11.76px;line-height:12px;color:#1f9e48;font-family:'Liberation Mono',monospace;white-space:pre;transform:scale(0.7439,1);transform-origin:0 50%">//</span>
<span style="left:412.7px;top:468.05px;font-size:10.5px;line-height:12px;color:#1f9e48;width:136.5px;text-align-last:justify;text-rendering:geometricPrecision">注意交易系统先开后平的原则</span>
<span style="top:499px;font-size:9px;line-height:12px;color:#1766d6;left:386px;width:54.00px;text-align-last:justify;">常见问题汇总</span>
<span style="top:499px;font-size:9px;line-height:12px;color:#1766d6;left:485.5px;width:72.00px;text-align-last:justify;">公式编写客服中心</span>
<span style="top:499px;font-size:9px;line-height:12px;color:#1766d6;left:595.5px;width:90.00px;text-align-last:justify;">公式模型编写调试教程</span>
<span style="top:499px;font-size:9px;line-height:12px;color:#1766d6;left:724.5px;width:99.00px;text-align-last:justify;">提高编写效率的注意事项</span>
<div style="left:857px;top:123px;width:211.5px;height:389px;background:#f0f0f0;border-radius:5px"></div>
<span style="top:127px;font-size:9px;line-height:12px;color:#9a9a9a;left:864px;width:36.00px;text-align-last:justify;">扩展属性</span>
<div style="left:1053px;top:128px;width:14px;height:14px;background:#dadada;"></div>
<svg style="left:1058px;top:132.500px" width="5" height="5"><path d="M.5.5l4 4M4.500.5l-4 4" stroke="#f4f4f4" stroke-width="1" fill="none"/></svg>
<span style="top:155px;font-size:9px;line-height:12px;color:#111;left:858px;width:29.50px;text-align-last:justify;">快捷码:</span>
<div style="left:898px;top:155px;width:165px;height:13.5px;background:#fff;border-bottom:1px solid #8a8a8a;border-radius:2px"></div>
<span style="left:899.5px;top:155.5px;font-size:10.08px;line-height:12px;color:#111;font-family:'Liberation Mono',monospace;white-space:pre;transform:scale(0.7439,1);transform-origin:0 50%">BIASGLLJYXT</span>
<span style="top:175px;font-size:9px;line-height:12px;color:#111;left:858px;width:38.50px;text-align-last:justify;">运行模式:</span>
<div style="left:906px;top:176.500px;width:9.500px;height:9.500px;border:1px solid #555;border-radius:50%;background:#fafafa"></div>
<span style="top:175px;font-size:9px;line-height:12px;color:#111;left:918px;width:36.00px;text-align-last:justify;">序列计算</span>
<span style="top:175px;font-size:9px;line-height:12px;color:#1766d6;left:972px;width:36.00px;text-align-last:justify;">模式说明</span>
<div style="left:906px;top:192px;width:9.500px;height:9.500px;border:3.2px solid #0a5fc0;border-radius:50%;background:#fff"></div>
<span style="top:191px;font-size:9px;line-height:12px;color:#111;left:918px;width:42.00px;text-align-last:justify;">逐K线计算</span>
<div style="left:965px;top:192px;width:9.500px;height:9.500px;background:#0a5fc0;border-radius:2px"></div>
<svg style="left:966.500px;top:194px" width="7" height="6"><path d="M.800 3l2 2L6.200 .800" stroke="#fff" stroke-width="1" fill="none"/></svg>
<span style="top:191px;font-size:9px;line-height:12px;color:#111;left:977px;width:51.00px;text-align-last:justify;">仅刷最后K线</span>
<div style="left:858.500px;top:208.500px;width:205px;height:300px;background:#f0f0f0;border:1px solid #c4c4c4;border-radius:2px"></div>
<div style="left:860px;top:210px;width:189.5px;height:286px;background:#fff;"></div>
<div style="left:906.5px;top:210px;width:1px;height:286px;background:#d8d8d8;"></div>
<div style="left:943px;top:210px;width:1px;height:286px;background:#d8d8d8;"></div>
<div style="left:979px;top:210px;width:1px;height:286px;background:#d8d8d8;"></div>
<div style="left:1016.5px;top:210px;width:1px;height:286px;background:#d8d8d8;"></div>
<div style="left:860px;top:227px;width:189.5px;height:1px;background:#d8d8d8;"></div>
<div style="left:860px;top:240.5px;width:189.5px;height:1px;background:#d8d8d8;"></div>
<div style="left:860px;top:254.0px;width:189.5px;height:1px;background:#d8d8d8;"></div>
<div style="left:860px;top:267.5px;width:189.5px;height:1px;background:#d8d8d8;"></div>
<div style="left:860px;top:281.0px;width:189.5px;height:1px;background:#d8d8d8;"></div>
<div style="left:860px;top:294.5px;width:189.5px;height:1px;background:#d8d8d8;"></div>
<div style="left:860px;top:308.0px;width:189.5px;height:1px;background:#d8d8d8;"></div>
<div style="left:860px;top:321.5px;width:189.5px;height:1px;background:#d8d8d8;"></div>
<div style="left:860px;top:335.0px;width:189.5px;height:1px;background:#d8d8d8;"></div>
<div style="left:860px;top:348.5px;width:189.5px;height:1px;background:#d8d8d8;"></div>
<div style="left:860px;top:362.0px;width:189.5px;height:1px;background:#d8d8d8;"></div>
<div style="left:860px;top:375.5px;width:189.5px;height:1px;background:#d8d8d8;"></div>
<div style="left:860px;top:389.0px;width:189.5px;height:1px;background:#d8d8d8;"></div>
<div style="left:860px;top:402.5px;width:189.5px;height:1px;background:#d8d8d8;"></div>
<div style="left:860px;top:416.0px;width:189.5px;height:1px;background:#d8d8d8;"></div>
<div style="left:860px;top:429.5px;width:189.5px;height:1px;background:#d8d8d8;"></div>
<div style="left:860px;top:443.0px;width:189.5px;height:1px;background:#d8d8d8;"></div>
<div style="left:860px;top:456.5px;width:189.5px;height:1px;background:#d8d8d8;"></div>
<div style="left:860px;top:470.0px;width:189.5px;height:1px;background:#d8d8d8;"></div>
<div style="left:860px;top:483.5px;width:189.5px;height:1px;background:#d8d8d8;"></div>
<span style="top:213px;font-size:9px;line-height:12px;color:#111;left:868.50px;width:27.00px;text-align-last:justify;">参数名</span>
<span style="top:213px;font-size:9px;line-height:12px;color:#111;left:915.00px;width:18.00px;text-align-last:justify;">缺省</span>
<span style="top:213px;font-size:9px;line-height:12px;color:#111;left:951.00px;width:18.00px;text-align-last:justify;">最小</span>
<span style="top:213px;font-size:9px;line-height:12px;color:#111;left:988.00px;width:18.00px;text-align-last:justify;">最大</span>
<span style="top:213px;font-size:9px;line-height:12px;color:#111;left:1025.00px;width:18.00px;text-align-last:justify;">步长</span>
<span style="left:864.3px;top:230px;font-size:10.08px;line-height:12px;color:#111;font-family:'Liberation Mono',monospace;white-space:pre;transform:scale(0.7439,1);transform-origin:0 50%">M</span>
<span style="left:911px;top:230px;font-size:10.08px;line-height:12px;color:#111;font-family:'Liberation Mono',monospace;white-space:pre;transform:scale(0.7439,1);transform-origin:0 50%">12</span>
<span style="left:947px;top:230px;font-size:10.08px;line-height:12px;color:#111;font-family:'Liberation Mono',monospace;white-space:pre;transform:scale(0.7439,1);transform-origin:0 50%">1</span>
<span style="left:983.5px;top:230px;font-size:10.08px;line-height:12px;color:#111;font-family:'Liberation Mono',monospace;white-space:pre;transform:scale(0.7439,1);transform-origin:0 50%">100</span>
<span style="left:1021.5px;top:230px;font-size:10.08px;line-height:12px;color:#111;font-family:'Liberation Mono',monospace;white-space:pre;transform:scale(0.7439,1);transform-origin:0 50%">10</span>
<span style="left:864.3px;top:243.5px;font-size:10.08px;line-height:12px;color:#111;font-family:'Liberation Mono',monospace;white-space:pre;transform:scale(0.7439,1);transform-origin:0 50%">LL</span>
<span style="left:911px;top:243.5px;font-size:10.08px;line-height:12px;color:#111;font-family:'Liberation Mono',monospace;white-space:pre;transform:scale(0.7439,1);transform-origin:0 50%">-6</span>
<span style="left:947px;top:243.5px;font-size:10.08px;line-height:12px;color:#111;font-family:'Liberation Mono',monospace;white-space:pre;transform:scale(0.7439,1);transform-origin:0 50%">-40</span>
<span style="left:983.5px;top:243.5px;font-size:10.08px;line-height:12px;color:#111;font-family:'Liberation Mono',monospace;white-space:pre;transform:scale(0.7439,1);transform-origin:0 50%">-1</span>
<span style="left:1021.5px;top:243.5px;font-size:10.08px;line-height:12px;color:#111;font-family:'Liberation Mono',monospace;white-space:pre;transform:scale(0.7439,1);transform-origin:0 50%">4</span>
<span style="left:864.3px;top:257px;font-size:10.08px;line-height:12px;color:#111;font-family:'Liberation Mono',monospace;white-space:pre;transform:scale(0.7439,1);transform-origin:0 50%">LH</span>
<span style="left:911px;top:257px;font-size:10.08px;line-height:12px;color:#111;font-family:'Liberation Mono',monospace;white-space:pre;transform:scale(0.7439,1);transform-origin:0 50%">6</span>
<span style="left:947px;top:257px;font-size:10.08px;line-height:12px;color:#111;font-family:'Liberation Mono',monospace;white-space:pre;transform:scale(0.7439,1);transform-origin:0 50%">1</span>
<span style="left:983.5px;top:257px;font-size:10.08px;line-height:12px;color:#111;font-family:'Liberation Mono',monospace;white-space:pre;transform:scale(0.7439,1);transform-origin:0 50%">40</span>
<span style="left:1021.5px;top:257px;font-size:10.08px;line-height:12px;color:#111;font-family:'Liberation Mono',monospace;white-space:pre;transform:scale(0.7439,1);transform-origin:0 50%">4</span>
<span style="left:864.3px;top:269.51px;font-size:9px;line-height:12px;color:#111;width:18px;text-align-last:justify;text-rendering:geometricPrecision">手数</span>
<span style="left:882.3px;top:270.5px;font-size:10.08px;line-height:12px;color:#111;font-family:'Liberation Mono',monospace;white-space:pre;transform:scale(0.7439,1);transform-origin:0 50%">...</span>
<span style="left:911px;top:270.5px;font-size:10.08px;line-height:12px;color:#111;font-family:'Liberation Mono',monospace;white-space:pre;transform:scale(0.7439,1);transform-origin:0 50%">1</span>
<span style="left:947px;top:270.5px;font-size:10.08px;line-height:12px;color:#111;font-family:'Liberation Mono',monospace;white-space:pre;transform:scale(0.7439,1);transform-origin:0 50%">0</span>
<span style="left:983.5px;top:270.5px;font-size:10.08px;line-height:12px;color:#111;font-family:'Liberation Mono',monospace;white-space:pre;transform:scale(0.7439,1);transform-origin:0 50%">10000</span>
<span style="left:1021.5px;top:270.5px;font-size:10.08px;line-height:12px;color:#111;font-family:'Liberation Mono',monospace;white-space:pre;transform:scale(0.7439,1);transform-origin:0 50%">1</span>
<div style="left:1055.5px;top:223px;width:1.5px;height:82px;background:#8c8c8c;"></div>
<div style="left:872px;top:501.5px;width:161px;height:1.5px;background:#7c7c7c;"></div>
</body></html>
